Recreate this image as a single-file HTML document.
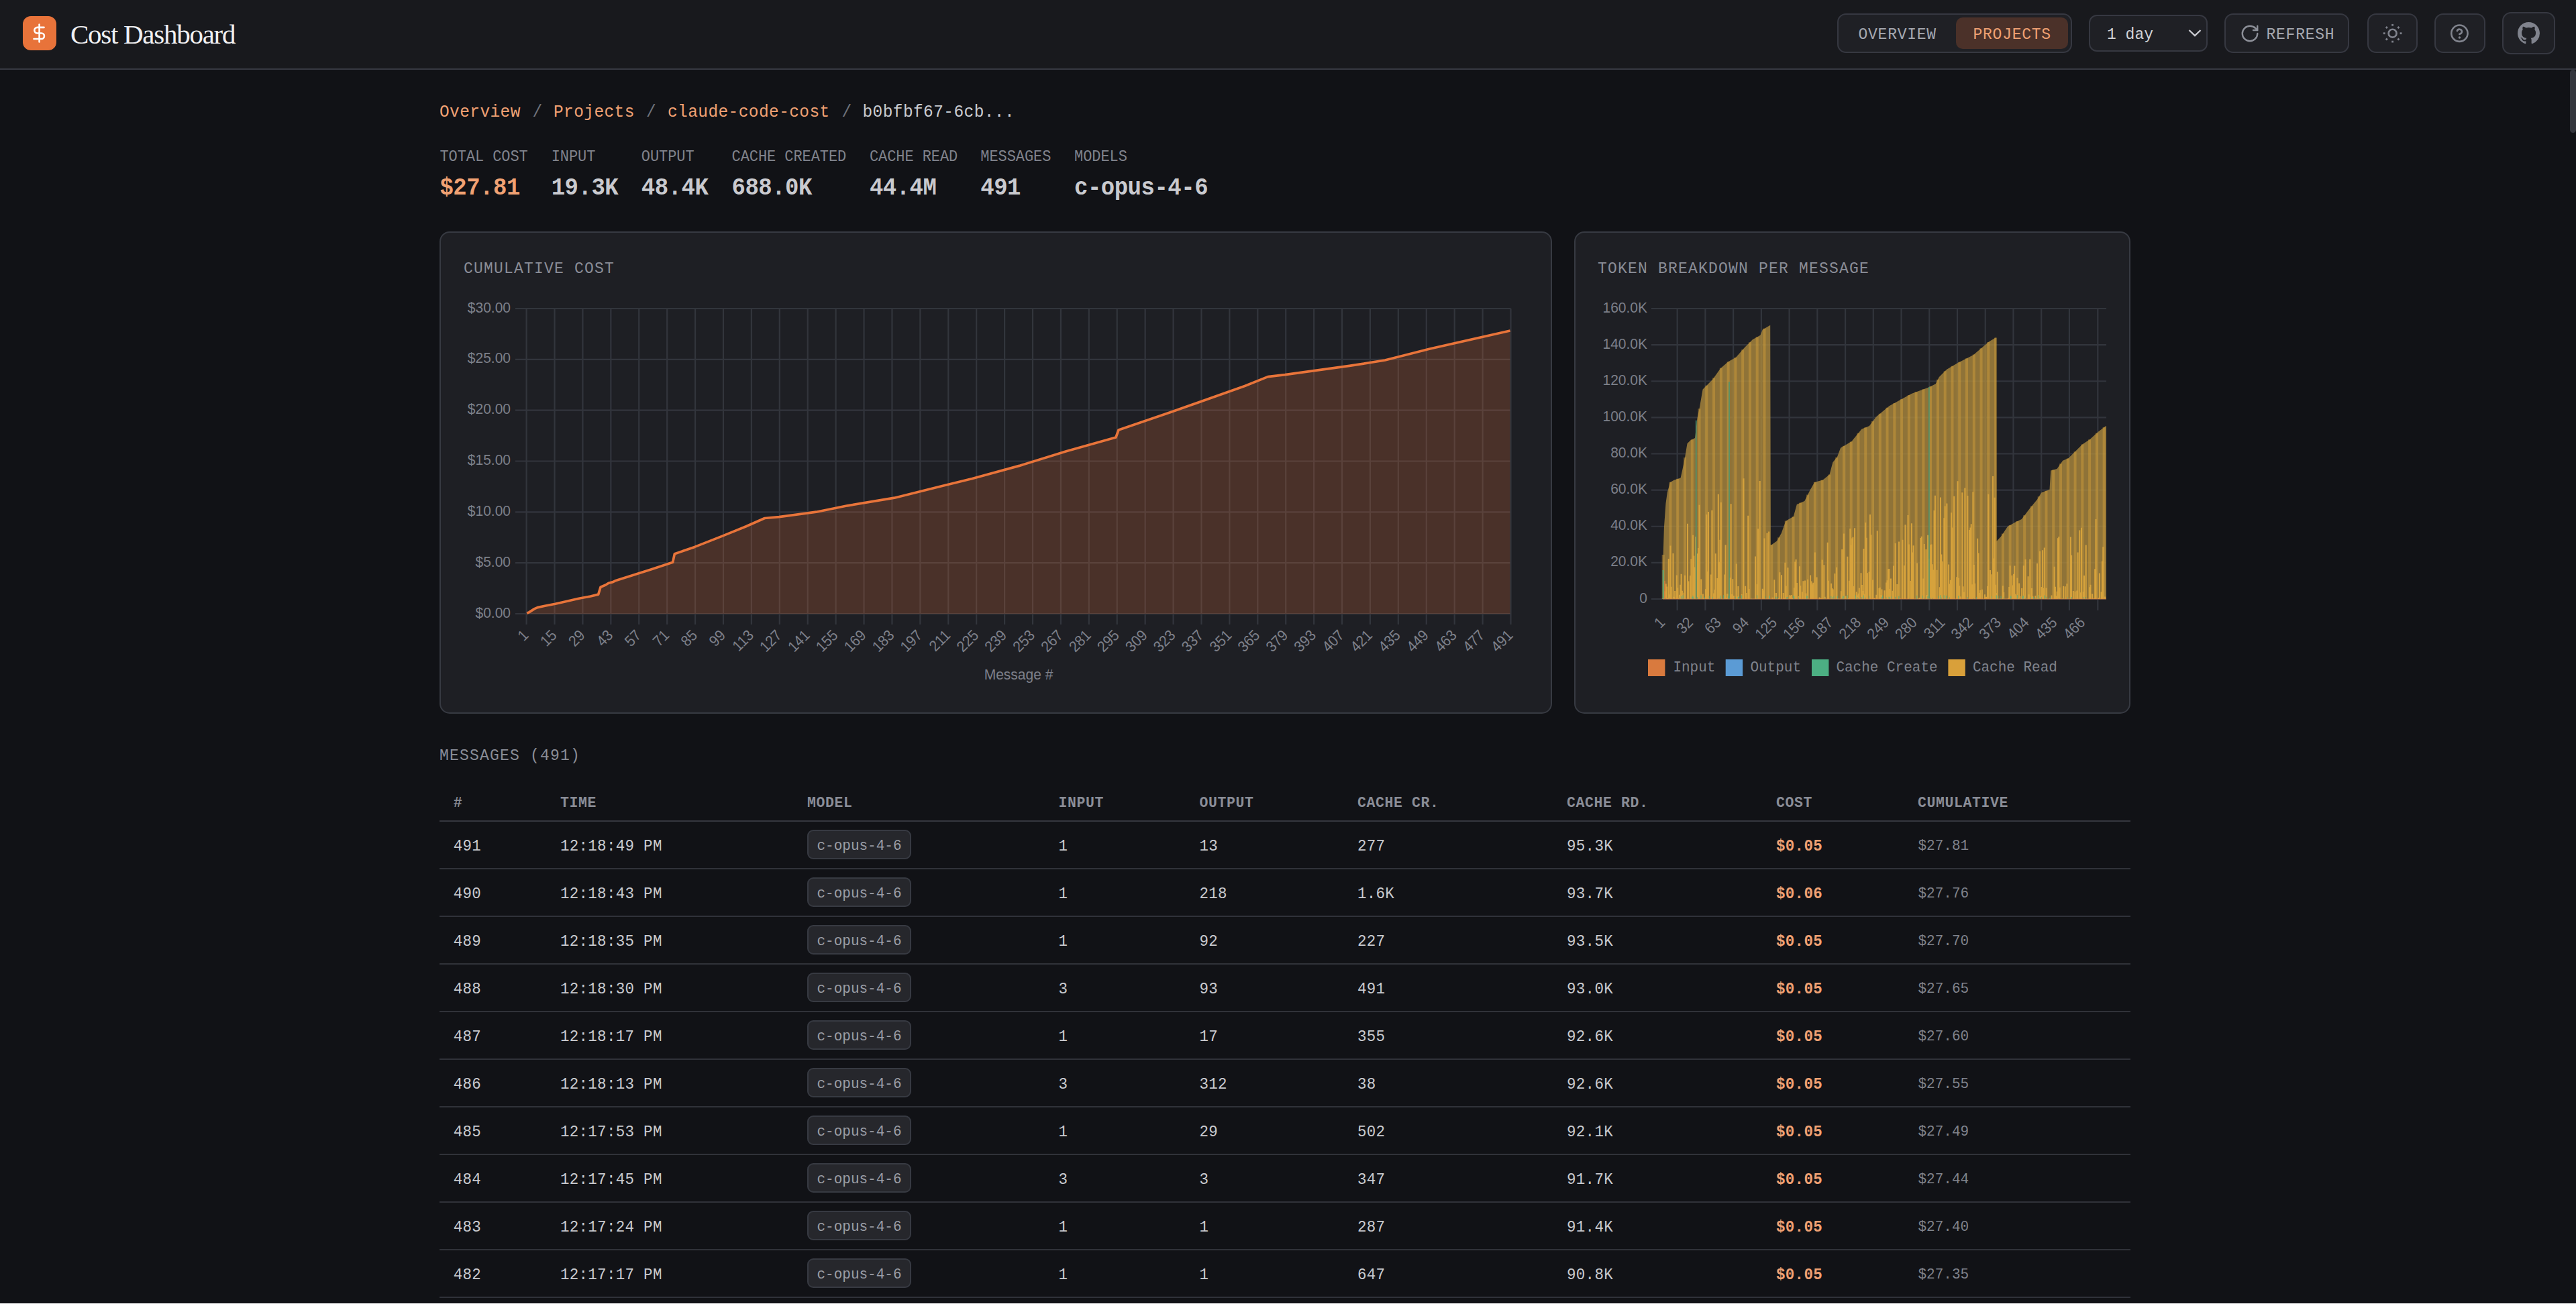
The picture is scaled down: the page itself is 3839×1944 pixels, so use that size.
<!DOCTYPE html>
<html><head><meta charset="utf-8"><title>Cost Dashboard</title>
<style>
html,body{margin:0;padding:0;background:#111216;width:3839px;height:1944px;overflow:hidden;}
body{position:relative;font-family:'Liberation Mono', monospace;}
</style></head><body>
<div style="position:absolute;left:0;top:0;width:3839px;height:102px;background:#18191d"></div>
<div style="position:absolute;left:0;top:102px;width:3839px;height:2px;background:#373942"></div>
<div style="position:absolute;left:34px;top:24px;width:50px;height:51px;border-radius:12px;background:#e8733a"></div>
<svg style="position:absolute;left:0;top:0" width="100" height="100" viewBox="0 0 100 100"><g fill="none" stroke="#fff" stroke-width="2.6" stroke-linecap="round" stroke-linejoin="round"><path d="M58.6 36.5V62.5"/><path d="M65.5 40.9H55.6a4.3 4.3 0 0 0 0 8.6H61.7a4.25 4.25 0 0 1 0 8.5H50.5"/></g></svg>
<div style="position:absolute;left:105.00px;top:25.67px;font-family:'Liberation Serif', serif;font-size:41px;line-height:50px;color:#f0f0f2;font-weight:400;letter-spacing:-1.28px;white-space:pre;">Cost Dashboard</div>
<div style="position:absolute;left:2738px;top:20px;width:350px;height:59px;box-sizing:border-box;border:2px solid #363841;border-radius:13px;background:#1f2025"></div>
<div style="position:absolute;left:2915px;top:26px;width:167px;height:47px;border-radius:10px;background:#4b3129"></div>
<div style="position:absolute;left:2769.50px;top:36.88px;font-family:'Liberation Mono', monospace;font-size:23px;line-height:30px;color:#a6a9b1;font-weight:400;letter-spacing:0.75px;white-space:pre;transform:scaleY(1.06);transform-origin:0 21.12px;">OVERVIEW</div>
<div style="position:absolute;left:2940.50px;top:36.88px;font-family:'Liberation Mono', monospace;font-size:23px;line-height:30px;color:#f0a173;font-weight:400;letter-spacing:0.75px;white-space:pre;transform:scaleY(1.06);transform-origin:0 21.12px;">PROJECTS</div>
<div style="position:absolute;left:3113px;top:22px;width:177px;height:55px;box-sizing:border-box;border:2px solid #363841;border-radius:12px;background:#1f2025"></div>
<div style="position:absolute;left:3140.00px;top:36.88px;font-family:'Liberation Mono', monospace;font-size:23px;line-height:30px;color:#d2d3d8;font-weight:400;letter-spacing:0px;white-space:pre;transform:scaleY(1.06);transform-origin:0 21.12px;">1 day</div>
<svg style="position:absolute;left:3258px;top:40px" width="26" height="18"><path d="M4.5 5 L13 13 L21.5 5" fill="none" stroke="#c9cad0" stroke-width="2.4"/></svg>
<div style="position:absolute;left:3315px;top:20px;width:186px;height:59px;box-sizing:border-box;border:2px solid #363841;border-radius:13px;background:#1f2025"></div>
<svg style="position:absolute;left:3337px;top:35px" width="32" height="30" viewBox="0 0 24 24"><g fill="none" stroke="#8d9099" stroke-width="1.9" stroke-linecap="round" stroke-linejoin="round"><path d="M21 12a9 9 0 1 1-9-9c2.52 0 4.93 1 6.74 2.74L21 8"/><path d="M21 3v5h-5"/></g></svg>
<div style="position:absolute;left:3377.50px;top:36.88px;font-family:'Liberation Mono', monospace;font-size:23px;line-height:30px;color:#a6a9b1;font-weight:400;letter-spacing:0.75px;white-space:pre;transform:scaleY(1.06);transform-origin:0 21.12px;">REFRESH</div>
<div style="position:absolute;left:3528px;top:20px;width:75px;height:59px;box-sizing:border-box;border:2px solid #363841;border-radius:13px;background:#1f2025"></div>
<div style="position:absolute;left:3628px;top:20px;width:76px;height:59px;box-sizing:border-box;border:2px solid #363841;border-radius:13px;background:#1f2025"></div>
<div style="position:absolute;left:3729px;top:18px;width:79px;height:63px;box-sizing:border-box;border:2px solid #363841;border-radius:13px;background:#1f2025"></div>
<svg style="position:absolute;left:0;top:0" width="3839" height="104" viewBox="0 0 3839 104"><g fill="#80838d"><circle cx="3565.6" cy="49.7" r="5.95" fill="none" stroke="#80838d" stroke-width="2.7"/><rect x="3576.60" y="48.30" width="2.8" height="2.8" transform="rotate(0 3578.00 49.70)"/><rect x="3572.97" y="57.07" width="2.8" height="2.8" transform="rotate(45 3574.37 58.47)"/><rect x="3564.20" y="60.70" width="2.8" height="2.8" transform="rotate(90 3565.60 62.10)"/><rect x="3555.43" y="57.07" width="2.8" height="2.8" transform="rotate(135 3556.83 58.47)"/><rect x="3551.80" y="48.30" width="2.8" height="2.8" transform="rotate(180 3553.20 49.70)"/><rect x="3555.43" y="39.53" width="2.8" height="2.8" transform="rotate(225 3556.83 40.93)"/><rect x="3564.20" y="35.90" width="2.8" height="2.8" transform="rotate(270 3565.60 37.30)"/><rect x="3572.97" y="39.53" width="2.8" height="2.8" transform="rotate(315 3574.37 40.93)"/></g><g fill="none" stroke="#80838d" stroke-width="2.6" stroke-linecap="round" stroke-linejoin="round"><circle cx="3665.4" cy="49.7" r="12.15"/><path d="M3661.85 46.05a3.65 3.65 0 0 1 7.08 1.22c0 2.43-3.65 3.65-3.65 3.65"/></g><circle cx="3665.4" cy="55.9" r="1.75" fill="#80838d"/></svg>
<svg style="position:absolute;left:3752px;top:33px" width="33" height="33" viewBox="0 0 16 16"><path fill="#80838d" d="M8 0C3.58 0 0 3.58 0 8c0 3.54 2.29 6.53 5.47 7.59.4.07.55-.17.55-.38 0-.19-.01-.82-.01-1.49-2.01.37-2.53-.49-2.69-.94-.09-.23-.48-.94-.82-1.13-.28-.15-.68-.52-.01-.53.63-.01 1.08.58 1.23.82.72 1.21 1.87.87 2.33.66.07-.52.28-.87.51-1.07-1.78-.2-3.64-.89-3.64-3.95 0-.87.31-1.59.82-2.15-.08-.2-.36-1.02.08-2.12 0 0 .67-.21 2.2.82.64-.18 1.32-.27 2-.27.68 0 1.36.09 2 .27 1.53-1.04 2.2-.82 2.2-.82.44 1.1.16 1.92.08 2.12.51.56.82 1.27.82 2.15 0 3.07-1.87 3.75-3.65 3.95.29.25.54.73.54 1.48 0 1.07-.01 1.93-.01 2.2 0 .21.15.46.55.38A8.013 8.013 0 0016 8c0-4.42-3.58-8-8-8z"/></svg>
<div style="position:absolute;left:3830px;top:104px;width:9px;height:94px;border-radius:5px;background:#34363d"></div>
<div style="position:absolute;left:655.00px;top:151.68px;font-family:'Liberation Mono', monospace;font-size:24.5px;line-height:32px;color:#f0a173;font-weight:400;letter-spacing:0.4px;white-space:pre;transform:scaleY(1.06);transform-origin:0 22.52px;">Overview</div>
<div style="position:absolute;left:793.50px;top:151.68px;font-family:'Liberation Mono', monospace;font-size:24.5px;line-height:32px;color:#6f727b;font-weight:400;letter-spacing:0.4px;white-space:pre;transform:scaleY(1.06);transform-origin:0 22.52px;">/</div>
<div style="position:absolute;left:825.00px;top:151.68px;font-family:'Liberation Mono', monospace;font-size:24.5px;line-height:32px;color:#f0a173;font-weight:400;letter-spacing:0.4px;white-space:pre;transform:scaleY(1.06);transform-origin:0 22.52px;">Projects</div>
<div style="position:absolute;left:963.00px;top:151.68px;font-family:'Liberation Mono', monospace;font-size:24.5px;line-height:32px;color:#6f727b;font-weight:400;letter-spacing:0.4px;white-space:pre;transform:scaleY(1.06);transform-origin:0 22.52px;">/</div>
<div style="position:absolute;left:995.00px;top:151.68px;font-family:'Liberation Mono', monospace;font-size:24.5px;line-height:32px;color:#f0a173;font-weight:400;letter-spacing:0.4px;white-space:pre;transform:scaleY(1.06);transform-origin:0 22.52px;">claude-code-cost</div>
<div style="position:absolute;left:1254.50px;top:151.68px;font-family:'Liberation Mono', monospace;font-size:24.5px;line-height:32px;color:#6f727b;font-weight:400;letter-spacing:0.4px;white-space:pre;transform:scaleY(1.06);transform-origin:0 22.52px;">/</div>
<div style="position:absolute;left:1285.50px;top:151.68px;font-family:'Liberation Mono', monospace;font-size:24.5px;line-height:32px;color:#c9cbd0;font-weight:400;letter-spacing:0.4px;white-space:pre;transform:scaleY(1.06);transform-origin:0 22.52px;">b0bfbf67-6cb...</div>
<div style="position:absolute;left:655.40px;top:219.65px;font-family:'Liberation Mono', monospace;font-size:22px;line-height:29px;color:#80838c;font-weight:400;letter-spacing:-0.07px;white-space:pre;transform:scaleY(1.06);transform-origin:0 20.35px;">TOTAL COST</div>
<div style="position:absolute;left:655.40px;top:259.25px;font-family:'Liberation Mono', monospace;font-size:34px;line-height:44px;color:#f0a173;font-weight:700;letter-spacing:-0.5px;white-space:pre;transform:scaleY(1.09);transform-origin:0 31.05px;">$27.81</div>
<div style="position:absolute;left:821.70px;top:219.65px;font-family:'Liberation Mono', monospace;font-size:22px;line-height:29px;color:#80838c;font-weight:400;letter-spacing:-0.07px;white-space:pre;transform:scaleY(1.06);transform-origin:0 20.35px;">INPUT</div>
<div style="position:absolute;left:821.70px;top:259.25px;font-family:'Liberation Mono', monospace;font-size:34px;line-height:44px;color:#c9cacf;font-weight:700;letter-spacing:-0.5px;white-space:pre;transform:scaleY(1.09);transform-origin:0 31.05px;">19.3K</div>
<div style="position:absolute;left:955.80px;top:219.65px;font-family:'Liberation Mono', monospace;font-size:22px;line-height:29px;color:#80838c;font-weight:400;letter-spacing:-0.07px;white-space:pre;transform:scaleY(1.06);transform-origin:0 20.35px;">OUTPUT</div>
<div style="position:absolute;left:955.80px;top:259.25px;font-family:'Liberation Mono', monospace;font-size:34px;line-height:44px;color:#c9cacf;font-weight:700;letter-spacing:-0.5px;white-space:pre;transform:scaleY(1.09);transform-origin:0 31.05px;">48.4K</div>
<div style="position:absolute;left:1090.50px;top:219.65px;font-family:'Liberation Mono', monospace;font-size:22px;line-height:29px;color:#80838c;font-weight:400;letter-spacing:-0.07px;white-space:pre;transform:scaleY(1.06);transform-origin:0 20.35px;">CACHE CREATED</div>
<div style="position:absolute;left:1090.50px;top:259.25px;font-family:'Liberation Mono', monospace;font-size:34px;line-height:44px;color:#c9cacf;font-weight:700;letter-spacing:-0.5px;white-space:pre;transform:scaleY(1.09);transform-origin:0 31.05px;">688.0K</div>
<div style="position:absolute;left:1295.90px;top:219.65px;font-family:'Liberation Mono', monospace;font-size:22px;line-height:29px;color:#80838c;font-weight:400;letter-spacing:-0.07px;white-space:pre;transform:scaleY(1.06);transform-origin:0 20.35px;">CACHE READ</div>
<div style="position:absolute;left:1295.90px;top:259.25px;font-family:'Liberation Mono', monospace;font-size:34px;line-height:44px;color:#c9cacf;font-weight:700;letter-spacing:-0.5px;white-space:pre;transform:scaleY(1.09);transform-origin:0 31.05px;">44.4M</div>
<div style="position:absolute;left:1461.30px;top:219.65px;font-family:'Liberation Mono', monospace;font-size:22px;line-height:29px;color:#80838c;font-weight:400;letter-spacing:-0.07px;white-space:pre;transform:scaleY(1.06);transform-origin:0 20.35px;">MESSAGES</div>
<div style="position:absolute;left:1461.30px;top:259.25px;font-family:'Liberation Mono', monospace;font-size:34px;line-height:44px;color:#c9cacf;font-weight:700;letter-spacing:-0.5px;white-space:pre;transform:scaleY(1.09);transform-origin:0 31.05px;">491</div>
<div style="position:absolute;left:1601.00px;top:219.65px;font-family:'Liberation Mono', monospace;font-size:22px;line-height:29px;color:#80838c;font-weight:400;letter-spacing:-0.07px;white-space:pre;transform:scaleY(1.06);transform-origin:0 20.35px;">MODELS</div>
<div style="position:absolute;left:1601.00px;top:259.25px;font-family:'Liberation Mono', monospace;font-size:34px;line-height:44px;color:#c9cacf;font-weight:700;letter-spacing:-0.5px;white-space:pre;transform:scaleY(1.09);transform-origin:0 31.05px;">c-opus-4-6</div>
<div style="position:absolute;left:655px;top:345px;width:1658px;height:719px;box-sizing:border-box;border:2px solid #373a42;border-radius:15px;background:#1e1f24"></div>
<div style="position:absolute;left:2346px;top:345px;width:829px;height:719px;box-sizing:border-box;border:2px solid #373a42;border-radius:15px;background:#1e1f24"></div>
<div style="position:absolute;left:691.00px;top:385.98px;font-family:'Liberation Mono', monospace;font-size:23px;line-height:30px;color:#8a8d97;font-weight:400;letter-spacing:1.2px;white-space:pre;transform:scaleY(1.06);transform-origin:0 21.12px;">CUMULATIVE COST</div>
<div style="position:absolute;left:2381.00px;top:385.98px;font-family:'Liberation Mono', monospace;font-size:23px;line-height:30px;color:#8a8d97;font-weight:400;letter-spacing:1.2px;white-space:pre;transform:scaleY(1.06);transform-origin:0 21.12px;">TOKEN BREAKDOWN PER MESSAGE</div>
<svg style="position:absolute;left:0;top:0" width="3839" height="1944" viewBox="0 0 3839 1944"><line x1="768" y1="915.00" x2="2251.5" y2="915.00" stroke="#32353c" stroke-width="2.2"/><text transform="translate(761,920.50) scale(1,1.08)" text-anchor="end" font-family="Liberation Sans" font-size="21" fill="#7d808a">$0.00</text><line x1="768" y1="839.17" x2="2251.5" y2="839.17" stroke="#32353c" stroke-width="2.2"/><text transform="translate(761,844.67) scale(1,1.08)" text-anchor="end" font-family="Liberation Sans" font-size="21" fill="#7d808a">$5.00</text><line x1="768" y1="763.33" x2="2251.5" y2="763.33" stroke="#32353c" stroke-width="2.2"/><text transform="translate(761,768.83) scale(1,1.08)" text-anchor="end" font-family="Liberation Sans" font-size="21" fill="#7d808a">$10.00</text><line x1="768" y1="687.50" x2="2251.5" y2="687.50" stroke="#32353c" stroke-width="2.2"/><text transform="translate(761,693.00) scale(1,1.08)" text-anchor="end" font-family="Liberation Sans" font-size="21" fill="#7d808a">$15.00</text><line x1="768" y1="611.67" x2="2251.5" y2="611.67" stroke="#32353c" stroke-width="2.2"/><text transform="translate(761,617.17) scale(1,1.08)" text-anchor="end" font-family="Liberation Sans" font-size="21" fill="#7d808a">$20.00</text><line x1="768" y1="535.83" x2="2251.5" y2="535.83" stroke="#32353c" stroke-width="2.2"/><text transform="translate(761,541.33) scale(1,1.08)" text-anchor="end" font-family="Liberation Sans" font-size="21" fill="#7d808a">$25.00</text><line x1="768" y1="460.00" x2="2251.5" y2="460.00" stroke="#32353c" stroke-width="2.2"/><text transform="translate(761,465.50) scale(1,1.08)" text-anchor="end" font-family="Liberation Sans" font-size="21" fill="#7d808a">$30.00</text><line x1="784.60" y1="460" x2="784.60" y2="931" stroke="#32353c" stroke-width="2.2"/><text transform="translate(789.10,948.5) rotate(-45) scale(1,1.08)" text-anchor="end" font-family="Liberation Sans" font-size="21" fill="#7d808a">1</text><line x1="826.51" y1="460" x2="826.51" y2="931" stroke="#32353c" stroke-width="2.2"/><text transform="translate(831.01,948.5) rotate(-45) scale(1,1.08)" text-anchor="end" font-family="Liberation Sans" font-size="21" fill="#7d808a">15</text><line x1="868.42" y1="460" x2="868.42" y2="931" stroke="#32353c" stroke-width="2.2"/><text transform="translate(872.92,948.5) rotate(-45) scale(1,1.08)" text-anchor="end" font-family="Liberation Sans" font-size="21" fill="#7d808a">29</text><line x1="910.33" y1="460" x2="910.33" y2="931" stroke="#32353c" stroke-width="2.2"/><text transform="translate(914.83,948.5) rotate(-45) scale(1,1.08)" text-anchor="end" font-family="Liberation Sans" font-size="21" fill="#7d808a">43</text><line x1="952.25" y1="460" x2="952.25" y2="931" stroke="#32353c" stroke-width="2.2"/><text transform="translate(956.75,948.5) rotate(-45) scale(1,1.08)" text-anchor="end" font-family="Liberation Sans" font-size="21" fill="#7d808a">57</text><line x1="994.16" y1="460" x2="994.16" y2="931" stroke="#32353c" stroke-width="2.2"/><text transform="translate(998.66,948.5) rotate(-45) scale(1,1.08)" text-anchor="end" font-family="Liberation Sans" font-size="21" fill="#7d808a">71</text><line x1="1036.07" y1="460" x2="1036.07" y2="931" stroke="#32353c" stroke-width="2.2"/><text transform="translate(1040.57,948.5) rotate(-45) scale(1,1.08)" text-anchor="end" font-family="Liberation Sans" font-size="21" fill="#7d808a">85</text><line x1="1077.98" y1="460" x2="1077.98" y2="931" stroke="#32353c" stroke-width="2.2"/><text transform="translate(1082.48,948.5) rotate(-45) scale(1,1.08)" text-anchor="end" font-family="Liberation Sans" font-size="21" fill="#7d808a">99</text><line x1="1119.89" y1="460" x2="1119.89" y2="931" stroke="#32353c" stroke-width="2.2"/><text transform="translate(1124.39,948.5) rotate(-45) scale(1,1.08)" text-anchor="end" font-family="Liberation Sans" font-size="21" fill="#7d808a">113</text><line x1="1161.80" y1="460" x2="1161.80" y2="931" stroke="#32353c" stroke-width="2.2"/><text transform="translate(1166.30,948.5) rotate(-45) scale(1,1.08)" text-anchor="end" font-family="Liberation Sans" font-size="21" fill="#7d808a">127</text><line x1="1203.71" y1="460" x2="1203.71" y2="931" stroke="#32353c" stroke-width="2.2"/><text transform="translate(1208.21,948.5) rotate(-45) scale(1,1.08)" text-anchor="end" font-family="Liberation Sans" font-size="21" fill="#7d808a">141</text><line x1="1245.63" y1="460" x2="1245.63" y2="931" stroke="#32353c" stroke-width="2.2"/><text transform="translate(1250.13,948.5) rotate(-45) scale(1,1.08)" text-anchor="end" font-family="Liberation Sans" font-size="21" fill="#7d808a">155</text><line x1="1287.54" y1="460" x2="1287.54" y2="931" stroke="#32353c" stroke-width="2.2"/><text transform="translate(1292.04,948.5) rotate(-45) scale(1,1.08)" text-anchor="end" font-family="Liberation Sans" font-size="21" fill="#7d808a">169</text><line x1="1329.45" y1="460" x2="1329.45" y2="931" stroke="#32353c" stroke-width="2.2"/><text transform="translate(1333.95,948.5) rotate(-45) scale(1,1.08)" text-anchor="end" font-family="Liberation Sans" font-size="21" fill="#7d808a">183</text><line x1="1371.36" y1="460" x2="1371.36" y2="931" stroke="#32353c" stroke-width="2.2"/><text transform="translate(1375.86,948.5) rotate(-45) scale(1,1.08)" text-anchor="end" font-family="Liberation Sans" font-size="21" fill="#7d808a">197</text><line x1="1413.27" y1="460" x2="1413.27" y2="931" stroke="#32353c" stroke-width="2.2"/><text transform="translate(1417.77,948.5) rotate(-45) scale(1,1.08)" text-anchor="end" font-family="Liberation Sans" font-size="21" fill="#7d808a">211</text><line x1="1455.18" y1="460" x2="1455.18" y2="931" stroke="#32353c" stroke-width="2.2"/><text transform="translate(1459.68,948.5) rotate(-45) scale(1,1.08)" text-anchor="end" font-family="Liberation Sans" font-size="21" fill="#7d808a">225</text><line x1="1497.09" y1="460" x2="1497.09" y2="931" stroke="#32353c" stroke-width="2.2"/><text transform="translate(1501.59,948.5) rotate(-45) scale(1,1.08)" text-anchor="end" font-family="Liberation Sans" font-size="21" fill="#7d808a">239</text><line x1="1539.01" y1="460" x2="1539.01" y2="931" stroke="#32353c" stroke-width="2.2"/><text transform="translate(1543.51,948.5) rotate(-45) scale(1,1.08)" text-anchor="end" font-family="Liberation Sans" font-size="21" fill="#7d808a">253</text><line x1="1580.92" y1="460" x2="1580.92" y2="931" stroke="#32353c" stroke-width="2.2"/><text transform="translate(1585.42,948.5) rotate(-45) scale(1,1.08)" text-anchor="end" font-family="Liberation Sans" font-size="21" fill="#7d808a">267</text><line x1="1622.83" y1="460" x2="1622.83" y2="931" stroke="#32353c" stroke-width="2.2"/><text transform="translate(1627.33,948.5) rotate(-45) scale(1,1.08)" text-anchor="end" font-family="Liberation Sans" font-size="21" fill="#7d808a">281</text><line x1="1664.74" y1="460" x2="1664.74" y2="931" stroke="#32353c" stroke-width="2.2"/><text transform="translate(1669.24,948.5) rotate(-45) scale(1,1.08)" text-anchor="end" font-family="Liberation Sans" font-size="21" fill="#7d808a">295</text><line x1="1706.65" y1="460" x2="1706.65" y2="931" stroke="#32353c" stroke-width="2.2"/><text transform="translate(1711.15,948.5) rotate(-45) scale(1,1.08)" text-anchor="end" font-family="Liberation Sans" font-size="21" fill="#7d808a">309</text><line x1="1748.56" y1="460" x2="1748.56" y2="931" stroke="#32353c" stroke-width="2.2"/><text transform="translate(1753.06,948.5) rotate(-45) scale(1,1.08)" text-anchor="end" font-family="Liberation Sans" font-size="21" fill="#7d808a">323</text><line x1="1790.47" y1="460" x2="1790.47" y2="931" stroke="#32353c" stroke-width="2.2"/><text transform="translate(1794.97,948.5) rotate(-45) scale(1,1.08)" text-anchor="end" font-family="Liberation Sans" font-size="21" fill="#7d808a">337</text><line x1="1832.39" y1="460" x2="1832.39" y2="931" stroke="#32353c" stroke-width="2.2"/><text transform="translate(1836.89,948.5) rotate(-45) scale(1,1.08)" text-anchor="end" font-family="Liberation Sans" font-size="21" fill="#7d808a">351</text><line x1="1874.30" y1="460" x2="1874.30" y2="931" stroke="#32353c" stroke-width="2.2"/><text transform="translate(1878.80,948.5) rotate(-45) scale(1,1.08)" text-anchor="end" font-family="Liberation Sans" font-size="21" fill="#7d808a">365</text><line x1="1916.21" y1="460" x2="1916.21" y2="931" stroke="#32353c" stroke-width="2.2"/><text transform="translate(1920.71,948.5) rotate(-45) scale(1,1.08)" text-anchor="end" font-family="Liberation Sans" font-size="21" fill="#7d808a">379</text><line x1="1958.12" y1="460" x2="1958.12" y2="931" stroke="#32353c" stroke-width="2.2"/><text transform="translate(1962.62,948.5) rotate(-45) scale(1,1.08)" text-anchor="end" font-family="Liberation Sans" font-size="21" fill="#7d808a">393</text><line x1="2000.03" y1="460" x2="2000.03" y2="931" stroke="#32353c" stroke-width="2.2"/><text transform="translate(2004.53,948.5) rotate(-45) scale(1,1.08)" text-anchor="end" font-family="Liberation Sans" font-size="21" fill="#7d808a">407</text><line x1="2041.94" y1="460" x2="2041.94" y2="931" stroke="#32353c" stroke-width="2.2"/><text transform="translate(2046.44,948.5) rotate(-45) scale(1,1.08)" text-anchor="end" font-family="Liberation Sans" font-size="21" fill="#7d808a">421</text><line x1="2083.85" y1="460" x2="2083.85" y2="931" stroke="#32353c" stroke-width="2.2"/><text transform="translate(2088.35,948.5) rotate(-45) scale(1,1.08)" text-anchor="end" font-family="Liberation Sans" font-size="21" fill="#7d808a">435</text><line x1="2125.77" y1="460" x2="2125.77" y2="931" stroke="#32353c" stroke-width="2.2"/><text transform="translate(2130.27,948.5) rotate(-45) scale(1,1.08)" text-anchor="end" font-family="Liberation Sans" font-size="21" fill="#7d808a">449</text><line x1="2167.68" y1="460" x2="2167.68" y2="931" stroke="#32353c" stroke-width="2.2"/><text transform="translate(2172.18,948.5) rotate(-45) scale(1,1.08)" text-anchor="end" font-family="Liberation Sans" font-size="21" fill="#7d808a">463</text><line x1="2209.59" y1="460" x2="2209.59" y2="931" stroke="#32353c" stroke-width="2.2"/><text transform="translate(2214.09,948.5) rotate(-45) scale(1,1.08)" text-anchor="end" font-family="Liberation Sans" font-size="21" fill="#7d808a">477</text><line x1="2251.50" y1="460" x2="2251.50" y2="931" stroke="#32353c" stroke-width="2.2"/><text transform="translate(2256.00,948.5) rotate(-45) scale(1,1.08)" text-anchor="end" font-family="Liberation Sans" font-size="21" fill="#7d808a">491</text><path d="M785.2,914.2 L788.7,912.6 L796.5,907.6 L801,905.6 L812,903.3 L827.5,900.2 L843,896.7 L862.5,892.2 L880,889 L891.7,886.1 L895,875.2 L902.6,872 L907,869.2 L913.5,867.6 L917.8,865.4 L970,849.1 L1002.6,838.3 L1005.3,825.8 L1035.2,815.4 L1076.5,799.1 L1111.3,785 L1139.6,772.5 L1161,770.6 L1216.5,763.2 L1263,753.8 L1333,742.2 L1403,724.7 L1449,713.5 L1519,694.4 L1589,672.8 L1663,652 L1667,641 L1746,614 L1855,575.5 L1889.5,561.6 L1915,558.7 L2011,545.4 L2064,537 L2131,520 L2250.5,493 L2250.5,915 L785,915 Z" fill="rgba(232,116,58,0.22)"/><path d="M785.2,914.2 L788.7,912.6 L796.5,907.6 L801,905.6 L812,903.3 L827.5,900.2 L843,896.7 L862.5,892.2 L880,889 L891.7,886.1 L895,875.2 L902.6,872 L907,869.2 L913.5,867.6 L917.8,865.4 L970,849.1 L1002.6,838.3 L1005.3,825.8 L1035.2,815.4 L1076.5,799.1 L1111.3,785 L1139.6,772.5 L1161,770.6 L1216.5,763.2 L1263,753.8 L1333,742.2 L1403,724.7 L1449,713.5 L1519,694.4 L1589,672.8 L1663,652 L1667,641 L1746,614 L1855,575.5 L1889.5,561.6 L1915,558.7 L2011,545.4 L2064,537 L2131,520 L2250.5,493" fill="none" stroke="#e8743a" stroke-width="3.7" stroke-linejoin="round"/><text transform="translate(1518,1013.3) scale(1,1.08)" text-anchor="middle" font-family="Liberation Sans" font-size="21" fill="#7d808a">Message #</text><line x1="2461" y1="893.00" x2="3139" y2="893.00" stroke="#32353c" stroke-width="2.2"/><text transform="translate(2455,898.50) scale(1,1.08)" text-anchor="end" font-family="Liberation Sans" font-size="21" fill="#7d808a">0</text><line x1="2461" y1="838.88" x2="3139" y2="838.88" stroke="#32353c" stroke-width="2.2"/><text transform="translate(2455,844.38) scale(1,1.08)" text-anchor="end" font-family="Liberation Sans" font-size="21" fill="#7d808a">20.0K</text><line x1="2461" y1="784.75" x2="3139" y2="784.75" stroke="#32353c" stroke-width="2.2"/><text transform="translate(2455,790.25) scale(1,1.08)" text-anchor="end" font-family="Liberation Sans" font-size="21" fill="#7d808a">40.0K</text><line x1="2461" y1="730.62" x2="3139" y2="730.62" stroke="#32353c" stroke-width="2.2"/><text transform="translate(2455,736.12) scale(1,1.08)" text-anchor="end" font-family="Liberation Sans" font-size="21" fill="#7d808a">60.0K</text><line x1="2461" y1="676.50" x2="3139" y2="676.50" stroke="#32353c" stroke-width="2.2"/><text transform="translate(2455,682.00) scale(1,1.08)" text-anchor="end" font-family="Liberation Sans" font-size="21" fill="#7d808a">80.0K</text><line x1="2461" y1="622.38" x2="3139" y2="622.38" stroke="#32353c" stroke-width="2.2"/><text transform="translate(2455,627.88) scale(1,1.08)" text-anchor="end" font-family="Liberation Sans" font-size="21" fill="#7d808a">100.0K</text><line x1="2461" y1="568.25" x2="3139" y2="568.25" stroke="#32353c" stroke-width="2.2"/><text transform="translate(2455,573.75) scale(1,1.08)" text-anchor="end" font-family="Liberation Sans" font-size="21" fill="#7d808a">120.0K</text><line x1="2461" y1="514.12" x2="3139" y2="514.12" stroke="#32353c" stroke-width="2.2"/><text transform="translate(2455,519.62) scale(1,1.08)" text-anchor="end" font-family="Liberation Sans" font-size="21" fill="#7d808a">140.0K</text><line x1="2461" y1="460.00" x2="3139" y2="460.00" stroke="#32353c" stroke-width="2.2"/><text transform="translate(2455,465.50) scale(1,1.08)" text-anchor="end" font-family="Liberation Sans" font-size="21" fill="#7d808a">160.0K</text><line x1="2499.67" y1="460" x2="2499.67" y2="910" stroke="#32353c" stroke-width="2.2"/><line x1="2541.40" y1="460" x2="2541.40" y2="910" stroke="#32353c" stroke-width="2.2"/><line x1="2583.13" y1="460" x2="2583.13" y2="910" stroke="#32353c" stroke-width="2.2"/><line x1="2624.87" y1="460" x2="2624.87" y2="910" stroke="#32353c" stroke-width="2.2"/><line x1="2666.60" y1="460" x2="2666.60" y2="910" stroke="#32353c" stroke-width="2.2"/><line x1="2708.33" y1="460" x2="2708.33" y2="910" stroke="#32353c" stroke-width="2.2"/><line x1="2750.07" y1="460" x2="2750.07" y2="910" stroke="#32353c" stroke-width="2.2"/><line x1="2791.80" y1="460" x2="2791.80" y2="910" stroke="#32353c" stroke-width="2.2"/><line x1="2833.53" y1="460" x2="2833.53" y2="910" stroke="#32353c" stroke-width="2.2"/><line x1="2875.27" y1="460" x2="2875.27" y2="910" stroke="#32353c" stroke-width="2.2"/><line x1="2917.00" y1="460" x2="2917.00" y2="910" stroke="#32353c" stroke-width="2.2"/><line x1="2958.73" y1="460" x2="2958.73" y2="910" stroke="#32353c" stroke-width="2.2"/><line x1="3000.46" y1="460" x2="3000.46" y2="910" stroke="#32353c" stroke-width="2.2"/><line x1="3042.20" y1="460" x2="3042.20" y2="910" stroke="#32353c" stroke-width="2.2"/><line x1="3083.93" y1="460" x2="3083.93" y2="910" stroke="#32353c" stroke-width="2.2"/><line x1="3126.30" y1="460" x2="3126.30" y2="910" stroke="#32353c" stroke-width="2.2"/><text transform="translate(2482.67,929.5) rotate(-45) scale(1,1.08)" text-anchor="end" font-family="Liberation Sans" font-size="21" fill="#7d808a">1</text><text transform="translate(2524.41,929.5) rotate(-45) scale(1,1.08)" text-anchor="end" font-family="Liberation Sans" font-size="21" fill="#7d808a">32</text><text transform="translate(2566.14,929.5) rotate(-45) scale(1,1.08)" text-anchor="end" font-family="Liberation Sans" font-size="21" fill="#7d808a">63</text><text transform="translate(2607.87,929.5) rotate(-45) scale(1,1.08)" text-anchor="end" font-family="Liberation Sans" font-size="21" fill="#7d808a">94</text><text transform="translate(2649.61,929.5) rotate(-45) scale(1,1.08)" text-anchor="end" font-family="Liberation Sans" font-size="21" fill="#7d808a">125</text><text transform="translate(2691.34,929.5) rotate(-45) scale(1,1.08)" text-anchor="end" font-family="Liberation Sans" font-size="21" fill="#7d808a">156</text><text transform="translate(2733.07,929.5) rotate(-45) scale(1,1.08)" text-anchor="end" font-family="Liberation Sans" font-size="21" fill="#7d808a">187</text><text transform="translate(2774.81,929.5) rotate(-45) scale(1,1.08)" text-anchor="end" font-family="Liberation Sans" font-size="21" fill="#7d808a">218</text><text transform="translate(2816.54,929.5) rotate(-45) scale(1,1.08)" text-anchor="end" font-family="Liberation Sans" font-size="21" fill="#7d808a">249</text><text transform="translate(2858.27,929.5) rotate(-45) scale(1,1.08)" text-anchor="end" font-family="Liberation Sans" font-size="21" fill="#7d808a">280</text><text transform="translate(2900.01,929.5) rotate(-45) scale(1,1.08)" text-anchor="end" font-family="Liberation Sans" font-size="21" fill="#7d808a">311</text><text transform="translate(2941.74,929.5) rotate(-45) scale(1,1.08)" text-anchor="end" font-family="Liberation Sans" font-size="21" fill="#7d808a">342</text><text transform="translate(2983.47,929.5) rotate(-45) scale(1,1.08)" text-anchor="end" font-family="Liberation Sans" font-size="21" fill="#7d808a">373</text><text transform="translate(3025.20,929.5) rotate(-45) scale(1,1.08)" text-anchor="end" font-family="Liberation Sans" font-size="21" fill="#7d808a">404</text><text transform="translate(3066.94,929.5) rotate(-45) scale(1,1.08)" text-anchor="end" font-family="Liberation Sans" font-size="21" fill="#7d808a">435</text><text transform="translate(3108.67,929.5) rotate(-45) scale(1,1.08)" text-anchor="end" font-family="Liberation Sans" font-size="21" fill="#7d808a">466</text><path d="M2478.00,893.00 L2478.20,842.70 L2479.90,786.60 L2482.50,750.30 L2484.80,733.90 L2489.10,719.00 L2494.70,715.70 L2504.60,712.40 L2507.90,697.60 L2511.20,681.00 L2514.50,661.30 L2519.50,656.30 L2526.00,653.00 L2529.40,623.40 L2532.70,608.50 L2537.60,580.50 L2542.60,575.50 L2552.50,565.60 L2564.00,549.20 L2575.50,539.30 L2587.00,532.70 L2600.30,517.80 L2611.80,506.30 L2623.40,499.70 L2626.70,491.40 L2638.20,484.80 L2638.90,813.00 L2648.10,806.40 L2654.70,794.90 L2661.30,776.70 L2672.80,770.10 L2677.80,752.00 L2689.30,747.00 L2697.60,730.60 L2704.20,719.00 L2716.60,715.60 L2726.50,707.40 L2731.40,689.30 L2738.00,681.00 L2743.00,667.80 L2759.50,657.90 L2774.30,639.80 L2785.80,634.90 L2795.70,621.70 L2815.50,605.20 L2848.50,587.00 L2874.90,577.20 L2884.70,572.20 L2889.70,562.30 L2901.20,550.80 L2917.70,540.90 L2940.80,529.30 L2963.90,509.60 L2974.80,503.00 L2975.40,807.00 L2982.10,799.70 L2991.90,785.00 L3003.00,778.80 L3012.80,773.90 L3025.00,758.00 L3036.10,744.50 L3042.20,734.60 L3054.50,729.70 L3056.20,701.50 L3065.50,699.00 L3074.10,686.80 L3082.70,683.10 L3093.80,672.00 L3103.60,662.20 L3114.60,654.90 L3126.90,643.80 L3138.00,635.20 L3139.00,635.20 L3139.00,893.00 Z" fill="rgba(176,140,62,0.78)"/><path d="M2476.673 827.09h4.0V893.0h-4.0ZM2487.443 718.80h4.0V893.0h-4.0ZM2498.213 713.86h4.0V893.0h-4.0ZM2508.983 682.09h4.0V893.0h-4.0ZM2519.753 655.16h4.0V893.0h-4.0ZM2530.522 609.30h4.0V893.0h-4.0ZM2541.292 574.81h4.0V893.0h-4.0ZM2552.062 563.37h4.0V893.0h-4.0ZM2562.832 548.48h4.0V893.0h-4.0ZM2573.602 539.24h4.0V893.0h-4.0ZM2584.372 533.06h4.0V893.0h-4.0ZM2595.142 521.34h4.0V893.0h-4.0ZM2605.911 510.19h4.0V893.0h-4.0ZM2616.681 502.38h4.0V893.0h-4.0ZM2627.451 489.82h4.0V893.0h-4.0ZM2638.221 812.05h4.0V893.0h-4.0ZM2648.991 801.36h4.0V893.0h-4.0ZM2659.761 776.44h4.0V893.0h-4.0ZM2670.531 770.25h4.0V893.0h-4.0ZM2681.300 749.61h4.0V893.0h-4.0ZM2692.070 737.57h4.0V893.0h-4.0ZM2702.840 718.82h4.0V893.0h-4.0ZM2713.610 715.87h4.0V893.0h-4.0ZM2724.380 707.50h4.0V893.0h-4.0ZM2735.150 682.07h4.0V893.0h-4.0ZM2745.920 664.85h4.0V893.0h-4.0ZM2756.689 658.39h4.0V893.0h-4.0ZM2767.459 645.72h4.0V893.0h-4.0ZM2778.229 637.27h4.0V893.0h-4.0ZM2788.999 627.97h4.0V893.0h-4.0ZM2799.769 616.64h4.0V893.0h-4.0ZM2810.539 607.67h4.0V893.0h-4.0ZM2821.309 600.89h4.0V893.0h-4.0ZM2832.078 594.95h4.0V893.0h-4.0ZM2842.848 589.01h4.0V893.0h-4.0ZM2853.618 584.36h4.0V893.0h-4.0ZM2864.388 580.36h4.0V893.0h-4.0ZM2875.158 576.05h4.0V893.0h-4.0ZM2885.928 565.81h4.0V893.0h-4.0ZM2896.698 553.30h4.0V893.0h-4.0ZM2907.467 545.84h4.0V893.0h-4.0ZM2918.237 539.63h4.0V893.0h-4.0ZM2929.007 534.22h4.0V893.0h-4.0ZM2939.777 528.47h4.0V893.0h-4.0ZM2950.547 519.28h4.0V893.0h-4.0ZM2961.317 510.10h4.0V893.0h-4.0ZM2972.087 503.43h4.0V893.0h-4.0ZM2982.856 795.57h4.0V893.0h-4.0ZM2993.626 782.92h4.0V893.0h-4.0ZM3004.396 777.10h4.0V893.0h-4.0ZM3015.166 768.21h4.0V893.0h-4.0ZM3025.936 754.43h4.0V893.0h-4.0ZM3036.706 740.27h4.0V893.0h-4.0ZM3047.476 731.70h4.0V893.0h-4.0ZM3058.245 700.41h4.0V893.0h-4.0ZM3069.015 691.18h4.0V893.0h-4.0ZM3079.785 683.49h4.0V893.0h-4.0ZM3090.555 673.25h4.0V893.0h-4.0ZM3101.325 662.48h4.0V893.0h-4.0ZM3112.095 655.24h4.0V893.0h-4.0ZM3122.865 645.64h4.0V893.0h-4.0ZM3133.634 637.03h4.0V893.0h-4.0Z" fill="rgba(217,165,60,0.42)"/><path d="M2477.673 891.68h2.0V893.0h-2.0ZM2479.019 892.38h2.0V893.0h-2.0ZM2480.366 881.53h2.0V893.0h-2.0ZM2481.712 870.24h2.0V893.0h-2.0ZM2483.058 874.42h2.0V893.0h-2.0ZM2484.404 891.64h2.0V893.0h-2.0ZM2485.751 832.97h2.0V893.0h-2.0ZM2487.097 886.34h2.0V893.0h-2.0ZM2488.443 813.50h2.0V893.0h-2.0ZM2489.789 874.83h2.0V893.0h-2.0ZM2492.482 824.88h2.0V893.0h-2.0ZM2493.828 889.70h2.0V893.0h-2.0ZM2495.174 880.96h2.0V893.0h-2.0ZM2497.867 857.44h2.0V893.0h-2.0ZM2499.213 876.29h2.0V893.0h-2.0ZM2500.559 892.19h2.0V893.0h-2.0ZM2501.905 886.87h2.0V893.0h-2.0ZM2503.252 871.71h2.0V893.0h-2.0ZM2504.598 855.74h2.0V893.0h-2.0ZM2505.944 880.67h2.0V893.0h-2.0ZM2508.636 883.72h2.0V893.0h-2.0ZM2509.983 857.71h2.0V893.0h-2.0ZM2514.021 780.78h2.0V893.0h-2.0ZM2515.368 866.48h2.0V893.0h-2.0ZM2518.060 858.00h2.0V893.0h-2.0ZM2519.406 833.25h2.0V893.0h-2.0ZM2522.099 797.87h2.0V893.0h-2.0ZM2523.445 828.52h2.0V893.0h-2.0ZM2524.791 845.50h2.0V893.0h-2.0ZM2526.137 800.11h2.0V893.0h-2.0ZM2528.830 825.29h2.0V893.0h-2.0ZM2530.176 817.03h2.0V893.0h-2.0ZM2531.522 752.81h2.0V893.0h-2.0ZM2534.215 863.40h2.0V893.0h-2.0ZM2535.561 892.76h2.0V893.0h-2.0ZM2536.907 885.46h2.0V893.0h-2.0ZM2538.254 891.72h2.0V893.0h-2.0ZM2540.946 878.23h2.0V893.0h-2.0ZM2542.292 767.09h2.0V893.0h-2.0ZM2543.638 852.02h2.0V893.0h-2.0ZM2544.985 763.05h2.0V893.0h-2.0ZM2549.023 856.53h2.0V893.0h-2.0ZM2550.370 760.66h2.0V893.0h-2.0ZM2553.062 884.38h2.0V893.0h-2.0ZM2554.408 879.03h2.0V893.0h-2.0ZM2555.755 825.18h2.0V893.0h-2.0ZM2557.101 892.99h2.0V893.0h-2.0ZM2558.447 861.99h2.0V893.0h-2.0ZM2559.793 736.69h2.0V893.0h-2.0ZM2561.140 837.70h2.0V893.0h-2.0ZM2562.486 804.80h2.0V893.0h-2.0ZM2563.832 749.12h2.0V893.0h-2.0ZM2569.217 856.39h2.0V893.0h-2.0ZM2570.563 812.22h2.0V893.0h-2.0ZM2571.909 891.21h2.0V893.0h-2.0ZM2573.256 884.99h2.0V893.0h-2.0ZM2574.602 891.82h2.0V893.0h-2.0ZM2575.948 885.85h2.0V893.0h-2.0ZM2577.294 861.18h2.0V893.0h-2.0ZM2578.641 751.30h2.0V893.0h-2.0ZM2579.987 886.02h2.0V893.0h-2.0ZM2581.333 863.37h2.0V893.0h-2.0ZM2582.679 887.93h2.0V893.0h-2.0ZM2586.718 840.45h2.0V893.0h-2.0ZM2588.064 889.25h2.0V893.0h-2.0ZM2589.410 873.99h2.0V893.0h-2.0ZM2592.103 892.70h2.0V893.0h-2.0ZM2594.795 885.92h2.0V893.0h-2.0ZM2596.142 892.60h2.0V893.0h-2.0ZM2597.488 713.18h2.0V893.0h-2.0ZM2600.180 873.82h2.0V893.0h-2.0ZM2601.526 883.99h2.0V893.0h-2.0ZM2604.219 768.68h2.0V893.0h-2.0ZM2605.565 878.12h2.0V893.0h-2.0ZM2614.989 829.49h2.0V893.0h-2.0ZM2616.335 892.53h2.0V893.0h-2.0ZM2617.681 870.65h2.0V893.0h-2.0ZM2619.027 788.21h2.0V893.0h-2.0ZM2621.720 717.11h2.0V893.0h-2.0ZM2625.759 877.64h2.0V893.0h-2.0ZM2627.105 880.32h2.0V893.0h-2.0ZM2628.451 802.56h2.0V893.0h-2.0ZM2632.490 794.76h2.0V893.0h-2.0ZM2635.182 792.43h2.0V893.0h-2.0ZM2640.567 890.81h2.0V893.0h-2.0ZM2643.260 864.26h2.0V893.0h-2.0ZM2645.952 883.91h2.0V893.0h-2.0ZM2649.991 891.63h2.0V893.0h-2.0ZM2651.337 853.35h2.0V893.0h-2.0ZM2654.030 857.19h2.0V893.0h-2.0ZM2656.722 884.05h2.0V893.0h-2.0ZM2658.068 891.26h2.0V893.0h-2.0ZM2659.414 838.86h2.0V893.0h-2.0ZM2660.761 873.41h2.0V893.0h-2.0ZM2663.453 846.24h2.0V893.0h-2.0ZM2666.146 887.26h2.0V893.0h-2.0ZM2667.492 887.66h2.0V893.0h-2.0ZM2668.838 886.89h2.0V893.0h-2.0ZM2670.184 891.07h2.0V893.0h-2.0ZM2672.877 876.18h2.0V893.0h-2.0ZM2674.223 837.51h2.0V893.0h-2.0ZM2675.569 834.00h2.0V893.0h-2.0ZM2676.915 868.89h2.0V893.0h-2.0ZM2678.262 892.92h2.0V893.0h-2.0ZM2679.608 889.03h2.0V893.0h-2.0ZM2680.954 844.22h2.0V893.0h-2.0ZM2682.300 872.88h2.0V893.0h-2.0ZM2684.993 882.25h2.0V893.0h-2.0ZM2686.339 866.29h2.0V893.0h-2.0ZM2689.032 865.46h2.0V893.0h-2.0ZM2690.378 884.54h2.0V893.0h-2.0ZM2693.070 863.85h2.0V893.0h-2.0ZM2697.109 857.51h2.0V893.0h-2.0ZM2698.455 866.44h2.0V893.0h-2.0ZM2699.801 871.19h2.0V893.0h-2.0ZM2701.148 868.71h2.0V893.0h-2.0ZM2703.840 823.39h2.0V893.0h-2.0ZM2706.533 860.41h2.0V893.0h-2.0ZM2710.571 890.55h2.0V893.0h-2.0ZM2711.918 891.98h2.0V893.0h-2.0ZM2713.264 891.96h2.0V893.0h-2.0ZM2714.610 834.45h2.0V893.0h-2.0ZM2717.302 842.32h2.0V893.0h-2.0ZM2718.649 889.70h2.0V893.0h-2.0ZM2722.687 808.64h2.0V893.0h-2.0ZM2724.034 865.84h2.0V893.0h-2.0ZM2728.072 869.63h2.0V893.0h-2.0ZM2729.419 877.09h2.0V893.0h-2.0ZM2730.765 878.40h2.0V893.0h-2.0ZM2733.457 854.97h2.0V893.0h-2.0ZM2734.803 892.89h2.0V893.0h-2.0ZM2736.150 845.70h2.0V893.0h-2.0ZM2737.496 892.00h2.0V893.0h-2.0ZM2742.881 881.15h2.0V893.0h-2.0ZM2744.227 818.92h2.0V893.0h-2.0ZM2745.573 889.48h2.0V893.0h-2.0ZM2746.920 795.57h2.0V893.0h-2.0ZM2749.612 888.47h2.0V893.0h-2.0ZM2752.304 829.85h2.0V893.0h-2.0ZM2753.651 892.10h2.0V893.0h-2.0ZM2754.997 865.76h2.0V893.0h-2.0ZM2756.343 788.08h2.0V893.0h-2.0ZM2757.689 812.45h2.0V893.0h-2.0ZM2759.036 802.46h2.0V893.0h-2.0ZM2760.382 800.64h2.0V893.0h-2.0ZM2761.728 873.98h2.0V893.0h-2.0ZM2763.074 787.27h2.0V893.0h-2.0ZM2764.421 889.26h2.0V893.0h-2.0ZM2765.767 882.34h2.0V893.0h-2.0ZM2767.113 887.47h2.0V893.0h-2.0ZM2768.459 884.86h2.0V893.0h-2.0ZM2769.805 876.47h2.0V893.0h-2.0ZM2772.498 854.17h2.0V893.0h-2.0ZM2773.844 872.04h2.0V893.0h-2.0ZM2775.190 880.93h2.0V893.0h-2.0ZM2776.537 817.92h2.0V893.0h-2.0ZM2777.883 885.46h2.0V893.0h-2.0ZM2779.229 779.02h2.0V893.0h-2.0ZM2780.575 801.75h2.0V893.0h-2.0ZM2781.922 854.14h2.0V893.0h-2.0ZM2784.614 852.39h2.0V893.0h-2.0ZM2785.960 767.03h2.0V893.0h-2.0ZM2787.307 797.32h2.0V893.0h-2.0ZM2789.999 864.53h2.0V893.0h-2.0ZM2791.345 892.05h2.0V893.0h-2.0ZM2792.691 891.51h2.0V893.0h-2.0ZM2795.384 886.76h2.0V893.0h-2.0ZM2796.730 791.26h2.0V893.0h-2.0ZM2799.423 877.01h2.0V893.0h-2.0ZM2800.769 875.85h2.0V893.0h-2.0ZM2802.115 887.01h2.0V893.0h-2.0ZM2803.461 878.59h2.0V893.0h-2.0ZM2807.500 880.14h2.0V893.0h-2.0ZM2810.192 868.38h2.0V893.0h-2.0ZM2811.539 865.26h2.0V893.0h-2.0ZM2812.885 848.50h2.0V893.0h-2.0ZM2814.231 848.03h2.0V893.0h-2.0ZM2815.577 878.00h2.0V893.0h-2.0ZM2816.924 862.61h2.0V893.0h-2.0ZM2818.270 892.77h2.0V893.0h-2.0ZM2819.616 880.80h2.0V893.0h-2.0ZM2820.962 843.62h2.0V893.0h-2.0ZM2823.655 810.02h2.0V893.0h-2.0ZM2826.347 871.09h2.0V893.0h-2.0ZM2829.040 807.55h2.0V893.0h-2.0ZM2830.386 892.27h2.0V893.0h-2.0ZM2834.425 804.72h2.0V893.0h-2.0ZM2837.117 843.00h2.0V893.0h-2.0ZM2838.463 782.24h2.0V893.0h-2.0ZM2842.502 767.95h2.0V893.0h-2.0ZM2843.848 811.45h2.0V893.0h-2.0ZM2845.195 892.58h2.0V893.0h-2.0ZM2846.541 866.02h2.0V893.0h-2.0ZM2847.887 780.15h2.0V893.0h-2.0ZM2849.233 823.52h2.0V893.0h-2.0ZM2850.579 813.15h2.0V893.0h-2.0ZM2851.926 892.99h2.0V893.0h-2.0ZM2855.964 839.59h2.0V893.0h-2.0ZM2857.311 891.47h2.0V893.0h-2.0ZM2860.003 891.12h2.0V893.0h-2.0ZM2861.349 802.03h2.0V893.0h-2.0ZM2862.696 799.64h2.0V893.0h-2.0ZM2865.388 862.48h2.0V893.0h-2.0ZM2866.734 810.97h2.0V893.0h-2.0ZM2869.427 818.91h2.0V893.0h-2.0ZM2870.773 886.93h2.0V893.0h-2.0ZM2872.119 797.86h2.0V893.0h-2.0ZM2873.465 832.71h2.0V893.0h-2.0ZM2874.812 891.65h2.0V893.0h-2.0ZM2876.158 812.37h2.0V893.0h-2.0ZM2877.504 811.44h2.0V893.0h-2.0ZM2878.850 841.23h2.0V893.0h-2.0ZM2880.197 849.39h2.0V893.0h-2.0ZM2881.543 760.96h2.0V893.0h-2.0ZM2882.889 738.72h2.0V893.0h-2.0ZM2885.581 849.82h2.0V893.0h-2.0ZM2889.620 875.25h2.0V893.0h-2.0ZM2890.966 741.62h2.0V893.0h-2.0ZM2892.313 826.50h2.0V893.0h-2.0ZM2893.659 837.05h2.0V893.0h-2.0ZM2896.351 772.21h2.0V893.0h-2.0ZM2897.698 754.51h2.0V893.0h-2.0ZM2900.390 750.53h2.0V893.0h-2.0ZM2901.736 892.68h2.0V893.0h-2.0ZM2903.082 841.56h2.0V893.0h-2.0ZM2904.429 870.49h2.0V893.0h-2.0ZM2905.775 864.85h2.0V893.0h-2.0ZM2907.121 764.19h2.0V893.0h-2.0ZM2908.467 786.38h2.0V893.0h-2.0ZM2911.160 739.87h2.0V893.0h-2.0ZM2915.199 860.27h2.0V893.0h-2.0ZM2916.545 717.36h2.0V893.0h-2.0ZM2917.891 861.84h2.0V893.0h-2.0ZM2919.237 873.30h2.0V893.0h-2.0ZM2920.584 889.36h2.0V893.0h-2.0ZM2923.276 734.32h2.0V893.0h-2.0ZM2924.622 874.29h2.0V893.0h-2.0ZM2925.968 882.42h2.0V893.0h-2.0ZM2927.315 727.40h2.0V893.0h-2.0ZM2931.353 738.91h2.0V893.0h-2.0ZM2934.046 789.90h2.0V893.0h-2.0ZM2935.392 786.56h2.0V893.0h-2.0ZM2936.738 781.29h2.0V893.0h-2.0ZM2938.085 871.37h2.0V893.0h-2.0ZM2939.431 733.28h2.0V893.0h-2.0ZM2940.777 842.10h2.0V893.0h-2.0ZM2942.123 869.68h2.0V893.0h-2.0ZM2946.162 802.87h2.0V893.0h-2.0ZM2947.508 824.47h2.0V893.0h-2.0ZM2948.854 884.11h2.0V893.0h-2.0ZM2950.201 880.10h2.0V893.0h-2.0ZM2952.893 878.71h2.0V893.0h-2.0ZM2956.932 886.35h2.0V893.0h-2.0ZM2958.278 889.79h2.0V893.0h-2.0ZM2959.624 889.76h2.0V893.0h-2.0ZM2960.970 873.88h2.0V893.0h-2.0ZM2962.317 736.78h2.0V893.0h-2.0ZM2965.009 850.07h2.0V893.0h-2.0ZM2966.355 856.31h2.0V893.0h-2.0ZM2967.702 891.29h2.0V893.0h-2.0ZM2969.048 709.95h2.0V893.0h-2.0ZM2970.394 832.61h2.0V893.0h-2.0ZM2971.740 741.73h2.0V893.0h-2.0ZM2973.087 871.83h2.0V893.0h-2.0ZM2974.433 883.95h2.0V893.0h-2.0ZM2975.779 852.62h2.0V893.0h-2.0ZM2979.818 892.87h2.0V893.0h-2.0ZM2983.856 873.29h2.0V893.0h-2.0ZM2985.203 882.90h2.0V893.0h-2.0ZM2991.934 891.74h2.0V893.0h-2.0ZM2993.280 874.88h2.0V893.0h-2.0ZM2994.626 843.32h2.0V893.0h-2.0ZM2997.319 857.63h2.0V893.0h-2.0ZM2998.665 872.58h2.0V893.0h-2.0ZM3000.011 855.75h2.0V893.0h-2.0ZM3001.357 843.61h2.0V893.0h-2.0ZM3002.704 885.44h2.0V893.0h-2.0ZM3004.050 887.48h2.0V893.0h-2.0ZM3005.396 861.51h2.0V893.0h-2.0ZM3006.742 892.36h2.0V893.0h-2.0ZM3008.089 869.58h2.0V893.0h-2.0ZM3009.435 888.38h2.0V893.0h-2.0ZM3010.781 892.97h2.0V893.0h-2.0ZM3012.127 877.00h2.0V893.0h-2.0ZM3014.820 843.14h2.0V893.0h-2.0ZM3016.166 887.69h2.0V893.0h-2.0ZM3017.512 833.91h2.0V893.0h-2.0ZM3020.205 892.90h2.0V893.0h-2.0ZM3021.551 859.26h2.0V893.0h-2.0ZM3022.897 886.36h2.0V893.0h-2.0ZM3024.243 833.73h2.0V893.0h-2.0ZM3025.590 892.78h2.0V893.0h-2.0ZM3026.936 877.11h2.0V893.0h-2.0ZM3028.282 888.53h2.0V893.0h-2.0ZM3032.321 888.09h2.0V893.0h-2.0ZM3035.013 840.05h2.0V893.0h-2.0ZM3036.359 887.20h2.0V893.0h-2.0ZM3039.052 821.77h2.0V893.0h-2.0ZM3040.398 888.44h2.0V893.0h-2.0ZM3041.744 875.07h2.0V893.0h-2.0ZM3043.091 820.23h2.0V893.0h-2.0ZM3044.437 876.65h2.0V893.0h-2.0ZM3045.783 816.38h2.0V893.0h-2.0ZM3047.129 892.48h2.0V893.0h-2.0ZM3048.476 876.49h2.0V893.0h-2.0ZM3056.553 887.53h2.0V893.0h-2.0ZM3060.592 844.85h2.0V893.0h-2.0ZM3061.938 874.85h2.0V893.0h-2.0ZM3063.284 888.27h2.0V893.0h-2.0ZM3064.630 881.86h2.0V893.0h-2.0ZM3065.977 802.25h2.0V893.0h-2.0ZM3067.323 799.94h2.0V893.0h-2.0ZM3068.669 875.68h2.0V893.0h-2.0ZM3072.708 892.38h2.0V893.0h-2.0ZM3074.054 873.70h2.0V893.0h-2.0ZM3076.746 874.34h2.0V893.0h-2.0ZM3079.439 869.98h2.0V893.0h-2.0ZM3083.478 892.65h2.0V893.0h-2.0ZM3084.824 800.55h2.0V893.0h-2.0ZM3086.170 827.68h2.0V893.0h-2.0ZM3088.863 881.11h2.0V893.0h-2.0ZM3091.555 881.71h2.0V893.0h-2.0ZM3094.247 880.56h2.0V893.0h-2.0ZM3095.594 823.50h2.0V893.0h-2.0ZM3098.286 790.46h2.0V893.0h-2.0ZM3099.632 883.37h2.0V893.0h-2.0ZM3100.979 786.70h2.0V893.0h-2.0ZM3103.671 881.96h2.0V893.0h-2.0ZM3105.017 858.02h2.0V893.0h-2.0ZM3107.710 812.43h2.0V893.0h-2.0ZM3113.095 875.15h2.0V893.0h-2.0ZM3114.441 871.79h2.0V893.0h-2.0ZM3117.133 885.36h2.0V893.0h-2.0ZM3119.826 891.84h2.0V893.0h-2.0ZM3121.172 848.32h2.0V893.0h-2.0ZM3122.518 774.03h2.0V893.0h-2.0ZM3126.557 891.14h2.0V893.0h-2.0ZM3127.903 854.61h2.0V893.0h-2.0ZM3130.596 882.28h2.0V893.0h-2.0ZM3131.942 836.63h2.0V893.0h-2.0ZM3133.288 815.20h2.0V893.0h-2.0ZM3135.981 889.45h2.0V893.0h-2.0Z" fill="rgb(214,162,60)"/><rect x="2477.6" y="850" width="2.2" height="43" fill="rgba(76,175,131,0.75)"/><rect x="2480.2" y="866" width="1.6" height="27" fill="rgba(217,122,62,0.85)"/><rect x="2526.90" y="626.7" width="1.6" height="266.29999999999995" fill="rgba(70,150,115,0.95)"/><rect x="2576.20" y="569" width="1.6" height="324.0" fill="rgba(70,150,115,0.95)"/><rect x="2874.10" y="577" width="1.6" height="316.0" fill="rgba(70,150,115,0.95)"/><rect x="2679.93" y="890.60" width="1" height="2.40" fill="rgba(76,175,131,0.8)"/><rect x="2662.43" y="890.14" width="1" height="2.86" fill="rgba(76,175,131,0.8)"/><rect x="2985.53" y="890.70" width="1" height="2.30" fill="rgba(76,175,131,0.8)"/><rect x="2779.56" y="890.76" width="1" height="2.24" fill="rgba(76,175,131,0.8)"/><rect x="2646.28" y="890.82" width="1" height="2.18" fill="rgba(76,175,131,0.8)"/><rect x="2671.86" y="887.58" width="1" height="5.42" fill="rgba(76,175,131,0.8)"/><rect x="2876.48" y="891.06" width="1" height="1.94" fill="rgba(76,175,131,0.8)"/><rect x="2522.43" y="890.02" width="1" height="2.98" fill="rgba(76,175,131,0.8)"/><rect x="2646.28" y="889.46" width="1" height="3.54" fill="rgba(76,175,131,0.8)"/><rect x="2636.86" y="888.75" width="1" height="4.25" fill="rgba(76,175,131,0.8)"/><rect x="2546.66" y="888.73" width="1" height="4.27" fill="rgba(76,175,131,0.8)"/><rect x="2502.23" y="891.49" width="1" height="1.51" fill="rgba(76,175,131,0.8)"/><rect x="2805.13" y="887.59" width="1" height="5.41" fill="rgba(76,175,131,0.8)"/><rect x="2636.86" y="887.80" width="1" height="5.20" fill="rgba(76,175,131,0.8)"/><rect x="3108.04" y="890.13" width="1" height="2.87" fill="rgba(76,175,131,0.8)"/><rect x="3081.11" y="890.53" width="1" height="2.47" fill="rgba(76,175,131,0.8)"/><rect x="2560.12" y="891.75" width="1" height="1.25" fill="rgba(76,175,131,0.8)"/><rect x="2891.29" y="887.14" width="1" height="5.86" fill="rgba(76,175,131,0.8)"/><rect x="2879.18" y="891.03" width="1" height="1.97" fill="rgba(76,175,131,0.8)"/><rect x="2529.16" y="890.14" width="1" height="2.86" fill="rgba(76,175,131,0.8)"/><rect x="3074.38" y="891.11" width="1" height="1.89" fill="rgba(76,175,131,0.8)"/><rect x="2892.64" y="890.70" width="1" height="2.30" fill="rgba(76,175,131,0.8)"/><rect x="3013.80" y="888.68" width="1" height="4.32" fill="rgba(76,175,131,0.8)"/><rect x="2482.04" y="891.47" width="1" height="1.53" fill="rgba(76,175,131,0.8)"/><rect x="2888.60" y="888.45" width="1" height="4.55" fill="rgba(76,175,131,0.8)"/><rect x="2718.98" y="890.91" width="1" height="2.09" fill="rgba(76,175,131,0.8)"/><rect x="2731.09" y="890.30" width="1" height="2.70" fill="rgba(76,175,131,0.8)"/><rect x="2507.62" y="890.98" width="1" height="2.02" fill="rgba(76,175,131,0.8)"/><rect x="2653.01" y="891.81" width="1" height="1.19" fill="rgba(76,175,131,0.8)"/><rect x="2981.49" y="888.74" width="1" height="4.26" fill="rgba(76,175,131,0.8)"/><rect x="2618.01" y="887.93" width="1" height="5.07" fill="rgba(76,175,131,0.8)"/><rect x="3042.07" y="890.36" width="1" height="2.64" fill="rgba(76,175,131,0.8)"/><rect x="2945.14" y="890.14" width="1" height="2.86" fill="rgba(76,175,131,0.8)"/><rect x="2904.76" y="890.44" width="1" height="2.56" fill="rgba(76,175,131,0.8)"/><rect x="2618.01" y="891.84" width="1" height="1.16" fill="rgba(76,175,131,0.8)"/><rect x="2818.60" y="889.26" width="1" height="3.74" fill="rgba(76,175,131,0.8)"/><rect x="2521.08" y="889.96" width="1" height="3.04" fill="rgba(76,175,131,0.8)"/><rect x="3025.92" y="890.02" width="1" height="2.98" fill="rgba(76,175,131,0.8)"/><rect x="2856.29" y="891.23" width="1" height="1.77" fill="rgba(76,175,131,0.8)"/><rect x="2845.52" y="891.54" width="1" height="1.46" fill="rgba(76,175,131,0.8)"/><rect x="2589.74" y="890.01" width="1" height="2.99" fill="rgba(76,175,131,0.8)"/><rect x="2663.78" y="889.95" width="1" height="3.05" fill="rgba(76,175,131,0.8)"/><rect x="2673.20" y="888.66" width="1" height="4.34" fill="rgba(76,175,131,0.8)"/><rect x="2764.75" y="887.23" width="1" height="5.77" fill="rgba(76,175,131,0.8)"/><rect x="2692.05" y="888.27" width="1" height="4.73" fill="rgba(76,175,131,0.8)"/><rect x="3086.50" y="890.21" width="1" height="2.79" fill="rgba(76,175,131,0.8)"/><rect x="2764.75" y="891.91" width="1" height="1.09" fill="rgba(76,175,131,0.8)"/><rect x="3005.72" y="887.02" width="1" height="5.98" fill="rgba(76,175,131,0.8)"/><rect x="2728.40" y="888.78" width="1" height="4.22" fill="rgba(76,175,131,0.8)"/><rect x="2747.25" y="888.36" width="1" height="4.64" fill="rgba(76,175,131,0.8)"/><rect x="2618.01" y="887.29" width="1" height="5.71" fill="rgba(76,175,131,0.8)"/><rect x="2776.86" y="887.49" width="1" height="5.51" fill="rgba(76,175,131,0.8)"/><rect x="2768.79" y="891.43" width="1" height="1.57" fill="rgba(76,175,131,0.8)"/><rect x="2539.93" y="889.97" width="1" height="3.03" fill="rgba(76,175,131,0.8)"/><rect x="3086.50" y="890.18" width="1" height="2.82" fill="rgba(76,175,131,0.8)"/><rect x="3009.76" y="891.19" width="1" height="1.81" fill="rgba(76,175,131,0.8)"/><rect x="2487.42" y="891.74" width="1" height="1.26" fill="rgba(76,175,131,0.8)"/><rect x="2574.93" y="888.80" width="1" height="4.20" fill="rgba(76,175,131,0.8)"/><rect x="3104.00" y="890.02" width="1" height="2.98" fill="rgba(76,175,131,0.8)"/><rect x="2872.45" y="888.89" width="1" height="4.11" fill="rgba(76,175,131,0.8)"/><rect x="2732.44" y="888.31" width="1" height="4.69" fill="rgba(76,175,131,0.8)"/><rect x="2595.12" y="891.27" width="1" height="1.73" fill="rgba(76,175,131,0.8)"/><rect x="2673.20" y="891.19" width="1" height="1.81" fill="rgba(76,175,131,0.8)"/><rect x="2595.12" y="887.37" width="1" height="5.63" fill="rgba(76,175,131,0.8)"/><rect x="2552.04" y="890.08" width="1" height="2.92" fill="rgba(76,175,131,0.8)"/><rect x="2996.30" y="887.98" width="1" height="5.02" fill="rgba(76,175,131,0.8)"/><rect x="3032.65" y="891.01" width="1" height="1.99" fill="rgba(76,175,131,0.8)"/><rect x="2564.16" y="887.81" width="1" height="5.19" fill="rgba(76,175,131,0.8)"/><rect x="2507.62" y="887.12" width="1" height="5.88" fill="rgba(76,175,131,0.8)"/><rect x="2810.52" y="890.43" width="1" height="2.57" fill="rgba(76,175,131,0.8)"/><rect x="2896.68" y="887.37" width="1" height="5.63" fill="rgba(76,175,131,0.8)"/><rect x="2744.55" y="891.57" width="1" height="1.43" fill="rgba(76,175,131,0.8)"/><rect x="2968.03" y="888.90" width="1" height="4.10" fill="rgba(76,175,131,0.8)"/><rect x="3046.11" y="887.54" width="1" height="5.46" fill="rgba(76,175,131,0.8)"/><rect x="2918.22" y="888.07" width="1" height="4.93" fill="rgba(76,175,131,0.8)"/><rect x="2630.12" y="888.89" width="1" height="4.11" fill="rgba(76,175,131,0.8)"/><rect x="2900.72" y="887.77" width="1" height="5.23" fill="rgba(76,175,131,0.8)"/><rect x="3048.80" y="889.64" width="1" height="3.36" fill="rgba(76,175,131,0.8)"/><rect x="2867.06" y="890.91" width="1" height="2.09" fill="rgba(76,175,131,0.8)"/><rect x="2752.63" y="887.31" width="1" height="5.69" fill="rgba(76,175,131,0.8)"/><rect x="2585.70" y="890.08" width="1" height="2.92" fill="rgba(76,175,131,0.8)"/><rect x="2562.81" y="891.25" width="1" height="1.75" fill="rgba(76,175,131,0.8)"/><rect x="2977.45" y="887.92" width="1" height="5.08" fill="rgba(76,175,131,0.8)"/><rect x="2609.93" y="891.79" width="1" height="1.21" fill="rgba(76,175,131,0.8)"/><rect x="2864.37" y="887.79" width="1" height="5.21" fill="rgba(76,175,131,0.8)"/><rect x="2941.10" y="891.81" width="1" height="1.19" fill="rgba(76,175,131,0.8)"/><rect x="3055.53" y="890.38" width="1" height="2.62" fill="rgba(76,175,131,0.8)"/><rect x="2745.90" y="889.00" width="1" height="4.00" fill="rgba(76,175,131,0.8)"/><rect x="2856.29" y="887.75" width="1" height="5.25" fill="rgba(76,175,131,0.8)"/><rect x="3013.80" y="890.47" width="1" height="2.53" fill="rgba(76,175,131,0.8)"/><rect x="2767.44" y="890.46" width="1" height="2.54" fill="rgba(76,175,131,0.8)"/><rect x="2648.97" y="889.87" width="1" height="3.13" fill="rgba(76,175,131,0.8)"/><rect x="2931.68" y="890.16" width="1" height="2.84" fill="rgba(76,175,131,0.8)"/><rect x="2823.98" y="889.81" width="1" height="3.19" fill="rgba(76,175,131,0.8)"/><rect x="2492.81" y="891.98" width="1" height="1.02" fill="rgba(76,175,131,0.8)"/><rect x="2814.56" y="889.67" width="1" height="3.33" fill="rgba(76,175,131,0.8)"/><rect x="2784.94" y="888.18" width="1" height="4.82" fill="rgba(76,175,131,0.8)"/><rect x="3015.15" y="887.91" width="1" height="5.09" fill="rgba(76,175,131,0.8)"/><rect x="3054.19" y="891.10" width="1" height="1.90" fill="rgba(76,175,131,0.8)"/><rect x="2803.79" y="890.00" width="1" height="3.00" fill="rgba(76,175,131,0.8)"/><rect x="2523.77" y="891.36" width="1" height="1.64" fill="rgba(76,175,131,0.8)"/><rect x="2774.17" y="890.17" width="1" height="2.83" fill="rgba(76,175,131,0.8)"/><rect x="3029.96" y="889.79" width="1" height="3.21" fill="rgba(76,175,131,0.8)"/><rect x="2829.37" y="888.71" width="1" height="4.29" fill="rgba(76,175,131,0.8)"/><rect x="2504.92" y="888.82" width="1" height="4.18" fill="rgba(76,175,131,0.8)"/><rect x="2534.54" y="887.39" width="1" height="5.61" fill="rgba(76,175,131,0.8)"/><rect x="2693.40" y="888.11" width="1" height="4.89" fill="rgba(76,175,131,0.8)"/><rect x="2829.37" y="891.60" width="1" height="1.40" fill="rgba(76,175,131,0.8)"/><rect x="2996.30" y="889.48" width="1" height="3.52" fill="rgba(76,175,131,0.8)"/><rect x="2737.82" y="888.74" width="1" height="4.26" fill="rgba(76,175,131,0.8)"/><rect x="3017.84" y="891.32" width="1" height="1.68" fill="rgba(76,175,131,0.8)"/><rect x="3067.65" y="891.67" width="1" height="1.33" fill="rgba(76,175,131,0.8)"/><rect x="2900.72" y="888.34" width="1" height="4.66" fill="rgba(76,175,131,0.8)"/><rect x="3039.38" y="891.45" width="1" height="1.55" fill="rgba(76,175,131,0.8)"/><rect x="2568.20" y="887.09" width="1" height="5.91" fill="rgba(76,175,131,0.8)"/><rect x="2815.90" y="890.56" width="1" height="2.44" fill="rgba(76,175,131,0.8)"/><rect x="3036.69" y="887.42" width="1" height="5.58" fill="rgba(76,175,131,0.8)"/><rect x="2591.08" y="888.57" width="1" height="4.43" fill="rgba(76,175,131,0.8)"/><rect x="2974.76" y="887.35" width="1" height="5.65" fill="rgba(76,175,131,0.8)"/><rect x="2522.43" y="887.83" width="1" height="5.17" fill="rgba(76,175,131,0.8)"/><line x1="2478" y1="893.0" x2="3139" y2="893.0" stroke="rgba(217,122,62,0.5)" stroke-width="1.5"/><rect x="2456" y="983" width="25.4" height="25" fill="#d97a3e"/><rect x="2571.7" y="983" width="25.4" height="25" fill="#5b9bd5"/><rect x="2700" y="983" width="25.4" height="25" fill="#4caf83"/><rect x="2903.4" y="983" width="25.4" height="25" fill="#d9a03a"/></svg>
<div style="position:absolute;left:2493.40px;top:981.91px;font-family:'Liberation Mono', monospace;font-size:21px;line-height:27px;color:#80838c;font-weight:400;letter-spacing:0px;white-space:pre;transform:scaleY(1.06);transform-origin:0 19.09px;">Input</div>
<div style="position:absolute;left:2608.40px;top:981.91px;font-family:'Liberation Mono', monospace;font-size:21px;line-height:27px;color:#80838c;font-weight:400;letter-spacing:0px;white-space:pre;transform:scaleY(1.06);transform-origin:0 19.09px;">Output</div>
<div style="position:absolute;left:2736.40px;top:981.91px;font-family:'Liberation Mono', monospace;font-size:21px;line-height:27px;color:#80838c;font-weight:400;letter-spacing:0px;white-space:pre;transform:scaleY(1.06);transform-origin:0 19.09px;">Cache Create</div>
<div style="position:absolute;left:2939.90px;top:981.91px;font-family:'Liberation Mono', monospace;font-size:21px;line-height:27px;color:#80838c;font-weight:400;letter-spacing:0px;white-space:pre;transform:scaleY(1.06);transform-origin:0 19.09px;">Cache Read</div>
<div style="position:absolute;left:655.00px;top:1111.58px;font-family:'Liberation Mono', monospace;font-size:23px;line-height:30px;color:#8a8d97;font-weight:400;letter-spacing:1.2px;white-space:pre;transform:scaleY(1.06);transform-origin:0 21.12px;">MESSAGES (491)</div>
<div style="position:absolute;left:675.70px;top:1182.58px;font-family:'Liberation Mono', monospace;font-size:21.5px;line-height:28px;color:#8a8d97;font-weight:700;letter-spacing:0.6px;white-space:pre;transform:scaleY(1.06);transform-origin:0 19.72px;">#</div>
<div style="position:absolute;left:834.90px;top:1182.58px;font-family:'Liberation Mono', monospace;font-size:21.5px;line-height:28px;color:#8a8d97;font-weight:700;letter-spacing:0.6px;white-space:pre;transform:scaleY(1.06);transform-origin:0 19.72px;">TIME</div>
<div style="position:absolute;left:1202.90px;top:1182.58px;font-family:'Liberation Mono', monospace;font-size:21.5px;line-height:28px;color:#8a8d97;font-weight:700;letter-spacing:0.6px;white-space:pre;transform:scaleY(1.06);transform-origin:0 19.72px;">MODEL</div>
<div style="position:absolute;left:1577.40px;top:1182.58px;font-family:'Liberation Mono', monospace;font-size:21.5px;line-height:28px;color:#8a8d97;font-weight:700;letter-spacing:0.6px;white-space:pre;transform:scaleY(1.06);transform-origin:0 19.72px;">INPUT</div>
<div style="position:absolute;left:1787.40px;top:1182.58px;font-family:'Liberation Mono', monospace;font-size:21.5px;line-height:28px;color:#8a8d97;font-weight:700;letter-spacing:0.6px;white-space:pre;transform:scaleY(1.06);transform-origin:0 19.72px;">OUTPUT</div>
<div style="position:absolute;left:2022.90px;top:1182.58px;font-family:'Liberation Mono', monospace;font-size:21.5px;line-height:28px;color:#8a8d97;font-weight:700;letter-spacing:0.6px;white-space:pre;transform:scaleY(1.06);transform-origin:0 19.72px;">CACHE CR.</div>
<div style="position:absolute;left:2335.00px;top:1182.58px;font-family:'Liberation Mono', monospace;font-size:21.5px;line-height:28px;color:#8a8d97;font-weight:700;letter-spacing:0.6px;white-space:pre;transform:scaleY(1.06);transform-origin:0 19.72px;">CACHE RD.</div>
<div style="position:absolute;left:2647.00px;top:1182.58px;font-family:'Liberation Mono', monospace;font-size:21.5px;line-height:28px;color:#8a8d97;font-weight:700;letter-spacing:0.6px;white-space:pre;transform:scaleY(1.06);transform-origin:0 19.72px;">COST</div>
<div style="position:absolute;left:2858.00px;top:1182.58px;font-family:'Liberation Mono', monospace;font-size:21.5px;line-height:28px;color:#8a8d97;font-weight:700;letter-spacing:0.6px;white-space:pre;transform:scaleY(1.06);transform-origin:0 19.72px;">CUMULATIVE</div>
<div style="position:absolute;left:655px;top:1223px;width:2520px;height:2px;background:#35373f"></div>
<div style="position:absolute;left:675.70px;top:1247.91px;font-family:'Liberation Mono', monospace;font-size:22.5px;line-height:29px;color:#c9cacf;font-weight:400;letter-spacing:0.3px;white-space:pre;transform:scaleY(1.06);transform-origin:0 20.49px;">491</div>
<div style="position:absolute;left:834.90px;top:1247.91px;font-family:'Liberation Mono', monospace;font-size:22.5px;line-height:29px;color:#c9cacf;font-weight:400;letter-spacing:0.3px;white-space:pre;transform:scaleY(1.06);transform-origin:0 20.49px;">12:18:49 PM</div>
<div style="position:absolute;left:1202.9px;top:1236.90px;width:154.8px;height:44px;box-sizing:border-box;border:2px solid #373a42;border-radius:9px;background:#26272c"></div>
<div style="position:absolute;left:1217.50px;top:1248.11px;font-family:'Liberation Mono', monospace;font-size:21px;line-height:27px;color:#9b9ea6;font-weight:400;letter-spacing:0px;white-space:pre;transform:scaleY(1.06);transform-origin:0 19.09px;">c-opus-4-6</div>
<div style="position:absolute;left:1577.40px;top:1247.91px;font-family:'Liberation Mono', monospace;font-size:22.5px;line-height:29px;color:#c9cacf;font-weight:400;letter-spacing:0.3px;white-space:pre;transform:scaleY(1.06);transform-origin:0 20.49px;">1</div>
<div style="position:absolute;left:1787.40px;top:1247.91px;font-family:'Liberation Mono', monospace;font-size:22.5px;line-height:29px;color:#c9cacf;font-weight:400;letter-spacing:0.3px;white-space:pre;transform:scaleY(1.06);transform-origin:0 20.49px;">13</div>
<div style="position:absolute;left:2022.90px;top:1247.91px;font-family:'Liberation Mono', monospace;font-size:22.5px;line-height:29px;color:#c9cacf;font-weight:400;letter-spacing:0.3px;white-space:pre;transform:scaleY(1.06);transform-origin:0 20.49px;">277</div>
<div style="position:absolute;left:2335.00px;top:1247.91px;font-family:'Liberation Mono', monospace;font-size:22.5px;line-height:29px;color:#c9cacf;font-weight:400;letter-spacing:0.3px;white-space:pre;transform:scaleY(1.06);transform-origin:0 20.49px;">95.3K</div>
<div style="position:absolute;left:2647.00px;top:1247.91px;font-family:'Liberation Mono', monospace;font-size:22.5px;line-height:29px;color:#f0a173;font-weight:700;letter-spacing:0.3px;white-space:pre;transform:scaleY(1.06);transform-origin:0 20.49px;">$0.05</div>
<div style="position:absolute;left:2858.50px;top:1247.71px;font-family:'Liberation Mono', monospace;font-size:21px;line-height:27px;color:#80838c;font-weight:400;letter-spacing:0px;white-space:pre;transform:scaleY(1.06);transform-origin:0 19.09px;">$27.81</div>
<div style="position:absolute;left:655px;top:1294.00px;width:2520px;height:2px;background:#303239"></div>
<div style="position:absolute;left:675.70px;top:1318.91px;font-family:'Liberation Mono', monospace;font-size:22.5px;line-height:29px;color:#c9cacf;font-weight:400;letter-spacing:0.3px;white-space:pre;transform:scaleY(1.06);transform-origin:0 20.49px;">490</div>
<div style="position:absolute;left:834.90px;top:1318.91px;font-family:'Liberation Mono', monospace;font-size:22.5px;line-height:29px;color:#c9cacf;font-weight:400;letter-spacing:0.3px;white-space:pre;transform:scaleY(1.06);transform-origin:0 20.49px;">12:18:43 PM</div>
<div style="position:absolute;left:1202.9px;top:1307.90px;width:154.8px;height:44px;box-sizing:border-box;border:2px solid #373a42;border-radius:9px;background:#26272c"></div>
<div style="position:absolute;left:1217.50px;top:1319.11px;font-family:'Liberation Mono', monospace;font-size:21px;line-height:27px;color:#9b9ea6;font-weight:400;letter-spacing:0px;white-space:pre;transform:scaleY(1.06);transform-origin:0 19.09px;">c-opus-4-6</div>
<div style="position:absolute;left:1577.40px;top:1318.91px;font-family:'Liberation Mono', monospace;font-size:22.5px;line-height:29px;color:#c9cacf;font-weight:400;letter-spacing:0.3px;white-space:pre;transform:scaleY(1.06);transform-origin:0 20.49px;">1</div>
<div style="position:absolute;left:1787.40px;top:1318.91px;font-family:'Liberation Mono', monospace;font-size:22.5px;line-height:29px;color:#c9cacf;font-weight:400;letter-spacing:0.3px;white-space:pre;transform:scaleY(1.06);transform-origin:0 20.49px;">218</div>
<div style="position:absolute;left:2022.90px;top:1318.91px;font-family:'Liberation Mono', monospace;font-size:22.5px;line-height:29px;color:#c9cacf;font-weight:400;letter-spacing:0.3px;white-space:pre;transform:scaleY(1.06);transform-origin:0 20.49px;">1.6K</div>
<div style="position:absolute;left:2335.00px;top:1318.91px;font-family:'Liberation Mono', monospace;font-size:22.5px;line-height:29px;color:#c9cacf;font-weight:400;letter-spacing:0.3px;white-space:pre;transform:scaleY(1.06);transform-origin:0 20.49px;">93.7K</div>
<div style="position:absolute;left:2647.00px;top:1318.91px;font-family:'Liberation Mono', monospace;font-size:22.5px;line-height:29px;color:#f0a173;font-weight:700;letter-spacing:0.3px;white-space:pre;transform:scaleY(1.06);transform-origin:0 20.49px;">$0.06</div>
<div style="position:absolute;left:2858.50px;top:1318.71px;font-family:'Liberation Mono', monospace;font-size:21px;line-height:27px;color:#80838c;font-weight:400;letter-spacing:0px;white-space:pre;transform:scaleY(1.06);transform-origin:0 19.09px;">$27.76</div>
<div style="position:absolute;left:655px;top:1365.00px;width:2520px;height:2px;background:#303239"></div>
<div style="position:absolute;left:675.70px;top:1389.91px;font-family:'Liberation Mono', monospace;font-size:22.5px;line-height:29px;color:#c9cacf;font-weight:400;letter-spacing:0.3px;white-space:pre;transform:scaleY(1.06);transform-origin:0 20.49px;">489</div>
<div style="position:absolute;left:834.90px;top:1389.91px;font-family:'Liberation Mono', monospace;font-size:22.5px;line-height:29px;color:#c9cacf;font-weight:400;letter-spacing:0.3px;white-space:pre;transform:scaleY(1.06);transform-origin:0 20.49px;">12:18:35 PM</div>
<div style="position:absolute;left:1202.9px;top:1378.90px;width:154.8px;height:44px;box-sizing:border-box;border:2px solid #373a42;border-radius:9px;background:#26272c"></div>
<div style="position:absolute;left:1217.50px;top:1390.11px;font-family:'Liberation Mono', monospace;font-size:21px;line-height:27px;color:#9b9ea6;font-weight:400;letter-spacing:0px;white-space:pre;transform:scaleY(1.06);transform-origin:0 19.09px;">c-opus-4-6</div>
<div style="position:absolute;left:1577.40px;top:1389.91px;font-family:'Liberation Mono', monospace;font-size:22.5px;line-height:29px;color:#c9cacf;font-weight:400;letter-spacing:0.3px;white-space:pre;transform:scaleY(1.06);transform-origin:0 20.49px;">1</div>
<div style="position:absolute;left:1787.40px;top:1389.91px;font-family:'Liberation Mono', monospace;font-size:22.5px;line-height:29px;color:#c9cacf;font-weight:400;letter-spacing:0.3px;white-space:pre;transform:scaleY(1.06);transform-origin:0 20.49px;">92</div>
<div style="position:absolute;left:2022.90px;top:1389.91px;font-family:'Liberation Mono', monospace;font-size:22.5px;line-height:29px;color:#c9cacf;font-weight:400;letter-spacing:0.3px;white-space:pre;transform:scaleY(1.06);transform-origin:0 20.49px;">227</div>
<div style="position:absolute;left:2335.00px;top:1389.91px;font-family:'Liberation Mono', monospace;font-size:22.5px;line-height:29px;color:#c9cacf;font-weight:400;letter-spacing:0.3px;white-space:pre;transform:scaleY(1.06);transform-origin:0 20.49px;">93.5K</div>
<div style="position:absolute;left:2647.00px;top:1389.91px;font-family:'Liberation Mono', monospace;font-size:22.5px;line-height:29px;color:#f0a173;font-weight:700;letter-spacing:0.3px;white-space:pre;transform:scaleY(1.06);transform-origin:0 20.49px;">$0.05</div>
<div style="position:absolute;left:2858.50px;top:1389.71px;font-family:'Liberation Mono', monospace;font-size:21px;line-height:27px;color:#80838c;font-weight:400;letter-spacing:0px;white-space:pre;transform:scaleY(1.06);transform-origin:0 19.09px;">$27.70</div>
<div style="position:absolute;left:655px;top:1436.00px;width:2520px;height:2px;background:#303239"></div>
<div style="position:absolute;left:675.70px;top:1460.91px;font-family:'Liberation Mono', monospace;font-size:22.5px;line-height:29px;color:#c9cacf;font-weight:400;letter-spacing:0.3px;white-space:pre;transform:scaleY(1.06);transform-origin:0 20.49px;">488</div>
<div style="position:absolute;left:834.90px;top:1460.91px;font-family:'Liberation Mono', monospace;font-size:22.5px;line-height:29px;color:#c9cacf;font-weight:400;letter-spacing:0.3px;white-space:pre;transform:scaleY(1.06);transform-origin:0 20.49px;">12:18:30 PM</div>
<div style="position:absolute;left:1202.9px;top:1449.90px;width:154.8px;height:44px;box-sizing:border-box;border:2px solid #373a42;border-radius:9px;background:#26272c"></div>
<div style="position:absolute;left:1217.50px;top:1461.11px;font-family:'Liberation Mono', monospace;font-size:21px;line-height:27px;color:#9b9ea6;font-weight:400;letter-spacing:0px;white-space:pre;transform:scaleY(1.06);transform-origin:0 19.09px;">c-opus-4-6</div>
<div style="position:absolute;left:1577.40px;top:1460.91px;font-family:'Liberation Mono', monospace;font-size:22.5px;line-height:29px;color:#c9cacf;font-weight:400;letter-spacing:0.3px;white-space:pre;transform:scaleY(1.06);transform-origin:0 20.49px;">3</div>
<div style="position:absolute;left:1787.40px;top:1460.91px;font-family:'Liberation Mono', monospace;font-size:22.5px;line-height:29px;color:#c9cacf;font-weight:400;letter-spacing:0.3px;white-space:pre;transform:scaleY(1.06);transform-origin:0 20.49px;">93</div>
<div style="position:absolute;left:2022.90px;top:1460.91px;font-family:'Liberation Mono', monospace;font-size:22.5px;line-height:29px;color:#c9cacf;font-weight:400;letter-spacing:0.3px;white-space:pre;transform:scaleY(1.06);transform-origin:0 20.49px;">491</div>
<div style="position:absolute;left:2335.00px;top:1460.91px;font-family:'Liberation Mono', monospace;font-size:22.5px;line-height:29px;color:#c9cacf;font-weight:400;letter-spacing:0.3px;white-space:pre;transform:scaleY(1.06);transform-origin:0 20.49px;">93.0K</div>
<div style="position:absolute;left:2647.00px;top:1460.91px;font-family:'Liberation Mono', monospace;font-size:22.5px;line-height:29px;color:#f0a173;font-weight:700;letter-spacing:0.3px;white-space:pre;transform:scaleY(1.06);transform-origin:0 20.49px;">$0.05</div>
<div style="position:absolute;left:2858.50px;top:1460.71px;font-family:'Liberation Mono', monospace;font-size:21px;line-height:27px;color:#80838c;font-weight:400;letter-spacing:0px;white-space:pre;transform:scaleY(1.06);transform-origin:0 19.09px;">$27.65</div>
<div style="position:absolute;left:655px;top:1507.00px;width:2520px;height:2px;background:#303239"></div>
<div style="position:absolute;left:675.70px;top:1531.91px;font-family:'Liberation Mono', monospace;font-size:22.5px;line-height:29px;color:#c9cacf;font-weight:400;letter-spacing:0.3px;white-space:pre;transform:scaleY(1.06);transform-origin:0 20.49px;">487</div>
<div style="position:absolute;left:834.90px;top:1531.91px;font-family:'Liberation Mono', monospace;font-size:22.5px;line-height:29px;color:#c9cacf;font-weight:400;letter-spacing:0.3px;white-space:pre;transform:scaleY(1.06);transform-origin:0 20.49px;">12:18:17 PM</div>
<div style="position:absolute;left:1202.9px;top:1520.90px;width:154.8px;height:44px;box-sizing:border-box;border:2px solid #373a42;border-radius:9px;background:#26272c"></div>
<div style="position:absolute;left:1217.50px;top:1532.11px;font-family:'Liberation Mono', monospace;font-size:21px;line-height:27px;color:#9b9ea6;font-weight:400;letter-spacing:0px;white-space:pre;transform:scaleY(1.06);transform-origin:0 19.09px;">c-opus-4-6</div>
<div style="position:absolute;left:1577.40px;top:1531.91px;font-family:'Liberation Mono', monospace;font-size:22.5px;line-height:29px;color:#c9cacf;font-weight:400;letter-spacing:0.3px;white-space:pre;transform:scaleY(1.06);transform-origin:0 20.49px;">1</div>
<div style="position:absolute;left:1787.40px;top:1531.91px;font-family:'Liberation Mono', monospace;font-size:22.5px;line-height:29px;color:#c9cacf;font-weight:400;letter-spacing:0.3px;white-space:pre;transform:scaleY(1.06);transform-origin:0 20.49px;">17</div>
<div style="position:absolute;left:2022.90px;top:1531.91px;font-family:'Liberation Mono', monospace;font-size:22.5px;line-height:29px;color:#c9cacf;font-weight:400;letter-spacing:0.3px;white-space:pre;transform:scaleY(1.06);transform-origin:0 20.49px;">355</div>
<div style="position:absolute;left:2335.00px;top:1531.91px;font-family:'Liberation Mono', monospace;font-size:22.5px;line-height:29px;color:#c9cacf;font-weight:400;letter-spacing:0.3px;white-space:pre;transform:scaleY(1.06);transform-origin:0 20.49px;">92.6K</div>
<div style="position:absolute;left:2647.00px;top:1531.91px;font-family:'Liberation Mono', monospace;font-size:22.5px;line-height:29px;color:#f0a173;font-weight:700;letter-spacing:0.3px;white-space:pre;transform:scaleY(1.06);transform-origin:0 20.49px;">$0.05</div>
<div style="position:absolute;left:2858.50px;top:1531.71px;font-family:'Liberation Mono', monospace;font-size:21px;line-height:27px;color:#80838c;font-weight:400;letter-spacing:0px;white-space:pre;transform:scaleY(1.06);transform-origin:0 19.09px;">$27.60</div>
<div style="position:absolute;left:655px;top:1578.00px;width:2520px;height:2px;background:#303239"></div>
<div style="position:absolute;left:675.70px;top:1602.91px;font-family:'Liberation Mono', monospace;font-size:22.5px;line-height:29px;color:#c9cacf;font-weight:400;letter-spacing:0.3px;white-space:pre;transform:scaleY(1.06);transform-origin:0 20.49px;">486</div>
<div style="position:absolute;left:834.90px;top:1602.91px;font-family:'Liberation Mono', monospace;font-size:22.5px;line-height:29px;color:#c9cacf;font-weight:400;letter-spacing:0.3px;white-space:pre;transform:scaleY(1.06);transform-origin:0 20.49px;">12:18:13 PM</div>
<div style="position:absolute;left:1202.9px;top:1591.90px;width:154.8px;height:44px;box-sizing:border-box;border:2px solid #373a42;border-radius:9px;background:#26272c"></div>
<div style="position:absolute;left:1217.50px;top:1603.11px;font-family:'Liberation Mono', monospace;font-size:21px;line-height:27px;color:#9b9ea6;font-weight:400;letter-spacing:0px;white-space:pre;transform:scaleY(1.06);transform-origin:0 19.09px;">c-opus-4-6</div>
<div style="position:absolute;left:1577.40px;top:1602.91px;font-family:'Liberation Mono', monospace;font-size:22.5px;line-height:29px;color:#c9cacf;font-weight:400;letter-spacing:0.3px;white-space:pre;transform:scaleY(1.06);transform-origin:0 20.49px;">3</div>
<div style="position:absolute;left:1787.40px;top:1602.91px;font-family:'Liberation Mono', monospace;font-size:22.5px;line-height:29px;color:#c9cacf;font-weight:400;letter-spacing:0.3px;white-space:pre;transform:scaleY(1.06);transform-origin:0 20.49px;">312</div>
<div style="position:absolute;left:2022.90px;top:1602.91px;font-family:'Liberation Mono', monospace;font-size:22.5px;line-height:29px;color:#c9cacf;font-weight:400;letter-spacing:0.3px;white-space:pre;transform:scaleY(1.06);transform-origin:0 20.49px;">38</div>
<div style="position:absolute;left:2335.00px;top:1602.91px;font-family:'Liberation Mono', monospace;font-size:22.5px;line-height:29px;color:#c9cacf;font-weight:400;letter-spacing:0.3px;white-space:pre;transform:scaleY(1.06);transform-origin:0 20.49px;">92.6K</div>
<div style="position:absolute;left:2647.00px;top:1602.91px;font-family:'Liberation Mono', monospace;font-size:22.5px;line-height:29px;color:#f0a173;font-weight:700;letter-spacing:0.3px;white-space:pre;transform:scaleY(1.06);transform-origin:0 20.49px;">$0.05</div>
<div style="position:absolute;left:2858.50px;top:1602.71px;font-family:'Liberation Mono', monospace;font-size:21px;line-height:27px;color:#80838c;font-weight:400;letter-spacing:0px;white-space:pre;transform:scaleY(1.06);transform-origin:0 19.09px;">$27.55</div>
<div style="position:absolute;left:655px;top:1649.00px;width:2520px;height:2px;background:#303239"></div>
<div style="position:absolute;left:675.70px;top:1673.91px;font-family:'Liberation Mono', monospace;font-size:22.5px;line-height:29px;color:#c9cacf;font-weight:400;letter-spacing:0.3px;white-space:pre;transform:scaleY(1.06);transform-origin:0 20.49px;">485</div>
<div style="position:absolute;left:834.90px;top:1673.91px;font-family:'Liberation Mono', monospace;font-size:22.5px;line-height:29px;color:#c9cacf;font-weight:400;letter-spacing:0.3px;white-space:pre;transform:scaleY(1.06);transform-origin:0 20.49px;">12:17:53 PM</div>
<div style="position:absolute;left:1202.9px;top:1662.90px;width:154.8px;height:44px;box-sizing:border-box;border:2px solid #373a42;border-radius:9px;background:#26272c"></div>
<div style="position:absolute;left:1217.50px;top:1674.11px;font-family:'Liberation Mono', monospace;font-size:21px;line-height:27px;color:#9b9ea6;font-weight:400;letter-spacing:0px;white-space:pre;transform:scaleY(1.06);transform-origin:0 19.09px;">c-opus-4-6</div>
<div style="position:absolute;left:1577.40px;top:1673.91px;font-family:'Liberation Mono', monospace;font-size:22.5px;line-height:29px;color:#c9cacf;font-weight:400;letter-spacing:0.3px;white-space:pre;transform:scaleY(1.06);transform-origin:0 20.49px;">1</div>
<div style="position:absolute;left:1787.40px;top:1673.91px;font-family:'Liberation Mono', monospace;font-size:22.5px;line-height:29px;color:#c9cacf;font-weight:400;letter-spacing:0.3px;white-space:pre;transform:scaleY(1.06);transform-origin:0 20.49px;">29</div>
<div style="position:absolute;left:2022.90px;top:1673.91px;font-family:'Liberation Mono', monospace;font-size:22.5px;line-height:29px;color:#c9cacf;font-weight:400;letter-spacing:0.3px;white-space:pre;transform:scaleY(1.06);transform-origin:0 20.49px;">502</div>
<div style="position:absolute;left:2335.00px;top:1673.91px;font-family:'Liberation Mono', monospace;font-size:22.5px;line-height:29px;color:#c9cacf;font-weight:400;letter-spacing:0.3px;white-space:pre;transform:scaleY(1.06);transform-origin:0 20.49px;">92.1K</div>
<div style="position:absolute;left:2647.00px;top:1673.91px;font-family:'Liberation Mono', monospace;font-size:22.5px;line-height:29px;color:#f0a173;font-weight:700;letter-spacing:0.3px;white-space:pre;transform:scaleY(1.06);transform-origin:0 20.49px;">$0.05</div>
<div style="position:absolute;left:2858.50px;top:1673.71px;font-family:'Liberation Mono', monospace;font-size:21px;line-height:27px;color:#80838c;font-weight:400;letter-spacing:0px;white-space:pre;transform:scaleY(1.06);transform-origin:0 19.09px;">$27.49</div>
<div style="position:absolute;left:655px;top:1720.00px;width:2520px;height:2px;background:#303239"></div>
<div style="position:absolute;left:675.70px;top:1744.91px;font-family:'Liberation Mono', monospace;font-size:22.5px;line-height:29px;color:#c9cacf;font-weight:400;letter-spacing:0.3px;white-space:pre;transform:scaleY(1.06);transform-origin:0 20.49px;">484</div>
<div style="position:absolute;left:834.90px;top:1744.91px;font-family:'Liberation Mono', monospace;font-size:22.5px;line-height:29px;color:#c9cacf;font-weight:400;letter-spacing:0.3px;white-space:pre;transform:scaleY(1.06);transform-origin:0 20.49px;">12:17:45 PM</div>
<div style="position:absolute;left:1202.9px;top:1733.90px;width:154.8px;height:44px;box-sizing:border-box;border:2px solid #373a42;border-radius:9px;background:#26272c"></div>
<div style="position:absolute;left:1217.50px;top:1745.11px;font-family:'Liberation Mono', monospace;font-size:21px;line-height:27px;color:#9b9ea6;font-weight:400;letter-spacing:0px;white-space:pre;transform:scaleY(1.06);transform-origin:0 19.09px;">c-opus-4-6</div>
<div style="position:absolute;left:1577.40px;top:1744.91px;font-family:'Liberation Mono', monospace;font-size:22.5px;line-height:29px;color:#c9cacf;font-weight:400;letter-spacing:0.3px;white-space:pre;transform:scaleY(1.06);transform-origin:0 20.49px;">3</div>
<div style="position:absolute;left:1787.40px;top:1744.91px;font-family:'Liberation Mono', monospace;font-size:22.5px;line-height:29px;color:#c9cacf;font-weight:400;letter-spacing:0.3px;white-space:pre;transform:scaleY(1.06);transform-origin:0 20.49px;">3</div>
<div style="position:absolute;left:2022.90px;top:1744.91px;font-family:'Liberation Mono', monospace;font-size:22.5px;line-height:29px;color:#c9cacf;font-weight:400;letter-spacing:0.3px;white-space:pre;transform:scaleY(1.06);transform-origin:0 20.49px;">347</div>
<div style="position:absolute;left:2335.00px;top:1744.91px;font-family:'Liberation Mono', monospace;font-size:22.5px;line-height:29px;color:#c9cacf;font-weight:400;letter-spacing:0.3px;white-space:pre;transform:scaleY(1.06);transform-origin:0 20.49px;">91.7K</div>
<div style="position:absolute;left:2647.00px;top:1744.91px;font-family:'Liberation Mono', monospace;font-size:22.5px;line-height:29px;color:#f0a173;font-weight:700;letter-spacing:0.3px;white-space:pre;transform:scaleY(1.06);transform-origin:0 20.49px;">$0.05</div>
<div style="position:absolute;left:2858.50px;top:1744.71px;font-family:'Liberation Mono', monospace;font-size:21px;line-height:27px;color:#80838c;font-weight:400;letter-spacing:0px;white-space:pre;transform:scaleY(1.06);transform-origin:0 19.09px;">$27.44</div>
<div style="position:absolute;left:655px;top:1791.00px;width:2520px;height:2px;background:#303239"></div>
<div style="position:absolute;left:675.70px;top:1815.91px;font-family:'Liberation Mono', monospace;font-size:22.5px;line-height:29px;color:#c9cacf;font-weight:400;letter-spacing:0.3px;white-space:pre;transform:scaleY(1.06);transform-origin:0 20.49px;">483</div>
<div style="position:absolute;left:834.90px;top:1815.91px;font-family:'Liberation Mono', monospace;font-size:22.5px;line-height:29px;color:#c9cacf;font-weight:400;letter-spacing:0.3px;white-space:pre;transform:scaleY(1.06);transform-origin:0 20.49px;">12:17:24 PM</div>
<div style="position:absolute;left:1202.9px;top:1804.90px;width:154.8px;height:44px;box-sizing:border-box;border:2px solid #373a42;border-radius:9px;background:#26272c"></div>
<div style="position:absolute;left:1217.50px;top:1816.11px;font-family:'Liberation Mono', monospace;font-size:21px;line-height:27px;color:#9b9ea6;font-weight:400;letter-spacing:0px;white-space:pre;transform:scaleY(1.06);transform-origin:0 19.09px;">c-opus-4-6</div>
<div style="position:absolute;left:1577.40px;top:1815.91px;font-family:'Liberation Mono', monospace;font-size:22.5px;line-height:29px;color:#c9cacf;font-weight:400;letter-spacing:0.3px;white-space:pre;transform:scaleY(1.06);transform-origin:0 20.49px;">1</div>
<div style="position:absolute;left:1787.40px;top:1815.91px;font-family:'Liberation Mono', monospace;font-size:22.5px;line-height:29px;color:#c9cacf;font-weight:400;letter-spacing:0.3px;white-space:pre;transform:scaleY(1.06);transform-origin:0 20.49px;">1</div>
<div style="position:absolute;left:2022.90px;top:1815.91px;font-family:'Liberation Mono', monospace;font-size:22.5px;line-height:29px;color:#c9cacf;font-weight:400;letter-spacing:0.3px;white-space:pre;transform:scaleY(1.06);transform-origin:0 20.49px;">287</div>
<div style="position:absolute;left:2335.00px;top:1815.91px;font-family:'Liberation Mono', monospace;font-size:22.5px;line-height:29px;color:#c9cacf;font-weight:400;letter-spacing:0.3px;white-space:pre;transform:scaleY(1.06);transform-origin:0 20.49px;">91.4K</div>
<div style="position:absolute;left:2647.00px;top:1815.91px;font-family:'Liberation Mono', monospace;font-size:22.5px;line-height:29px;color:#f0a173;font-weight:700;letter-spacing:0.3px;white-space:pre;transform:scaleY(1.06);transform-origin:0 20.49px;">$0.05</div>
<div style="position:absolute;left:2858.50px;top:1815.71px;font-family:'Liberation Mono', monospace;font-size:21px;line-height:27px;color:#80838c;font-weight:400;letter-spacing:0px;white-space:pre;transform:scaleY(1.06);transform-origin:0 19.09px;">$27.40</div>
<div style="position:absolute;left:655px;top:1862.00px;width:2520px;height:2px;background:#303239"></div>
<div style="position:absolute;left:675.70px;top:1886.91px;font-family:'Liberation Mono', monospace;font-size:22.5px;line-height:29px;color:#c9cacf;font-weight:400;letter-spacing:0.3px;white-space:pre;transform:scaleY(1.06);transform-origin:0 20.49px;">482</div>
<div style="position:absolute;left:834.90px;top:1886.91px;font-family:'Liberation Mono', monospace;font-size:22.5px;line-height:29px;color:#c9cacf;font-weight:400;letter-spacing:0.3px;white-space:pre;transform:scaleY(1.06);transform-origin:0 20.49px;">12:17:17 PM</div>
<div style="position:absolute;left:1202.9px;top:1875.90px;width:154.8px;height:44px;box-sizing:border-box;border:2px solid #373a42;border-radius:9px;background:#26272c"></div>
<div style="position:absolute;left:1217.50px;top:1887.11px;font-family:'Liberation Mono', monospace;font-size:21px;line-height:27px;color:#9b9ea6;font-weight:400;letter-spacing:0px;white-space:pre;transform:scaleY(1.06);transform-origin:0 19.09px;">c-opus-4-6</div>
<div style="position:absolute;left:1577.40px;top:1886.91px;font-family:'Liberation Mono', monospace;font-size:22.5px;line-height:29px;color:#c9cacf;font-weight:400;letter-spacing:0.3px;white-space:pre;transform:scaleY(1.06);transform-origin:0 20.49px;">1</div>
<div style="position:absolute;left:1787.40px;top:1886.91px;font-family:'Liberation Mono', monospace;font-size:22.5px;line-height:29px;color:#c9cacf;font-weight:400;letter-spacing:0.3px;white-space:pre;transform:scaleY(1.06);transform-origin:0 20.49px;">1</div>
<div style="position:absolute;left:2022.90px;top:1886.91px;font-family:'Liberation Mono', monospace;font-size:22.5px;line-height:29px;color:#c9cacf;font-weight:400;letter-spacing:0.3px;white-space:pre;transform:scaleY(1.06);transform-origin:0 20.49px;">647</div>
<div style="position:absolute;left:2335.00px;top:1886.91px;font-family:'Liberation Mono', monospace;font-size:22.5px;line-height:29px;color:#c9cacf;font-weight:400;letter-spacing:0.3px;white-space:pre;transform:scaleY(1.06);transform-origin:0 20.49px;">90.8K</div>
<div style="position:absolute;left:2647.00px;top:1886.91px;font-family:'Liberation Mono', monospace;font-size:22.5px;line-height:29px;color:#f0a173;font-weight:700;letter-spacing:0.3px;white-space:pre;transform:scaleY(1.06);transform-origin:0 20.49px;">$0.05</div>
<div style="position:absolute;left:2858.50px;top:1886.71px;font-family:'Liberation Mono', monospace;font-size:21px;line-height:27px;color:#80838c;font-weight:400;letter-spacing:0px;white-space:pre;transform:scaleY(1.06);transform-origin:0 19.09px;">$27.35</div>
<div style="position:absolute;left:655px;top:1933.00px;width:2520px;height:2px;background:#303239"></div>
<div style="position:absolute;left:0;top:1943px;width:3839px;height:1px;background:#f4f4f4"></div>
</body></html>
